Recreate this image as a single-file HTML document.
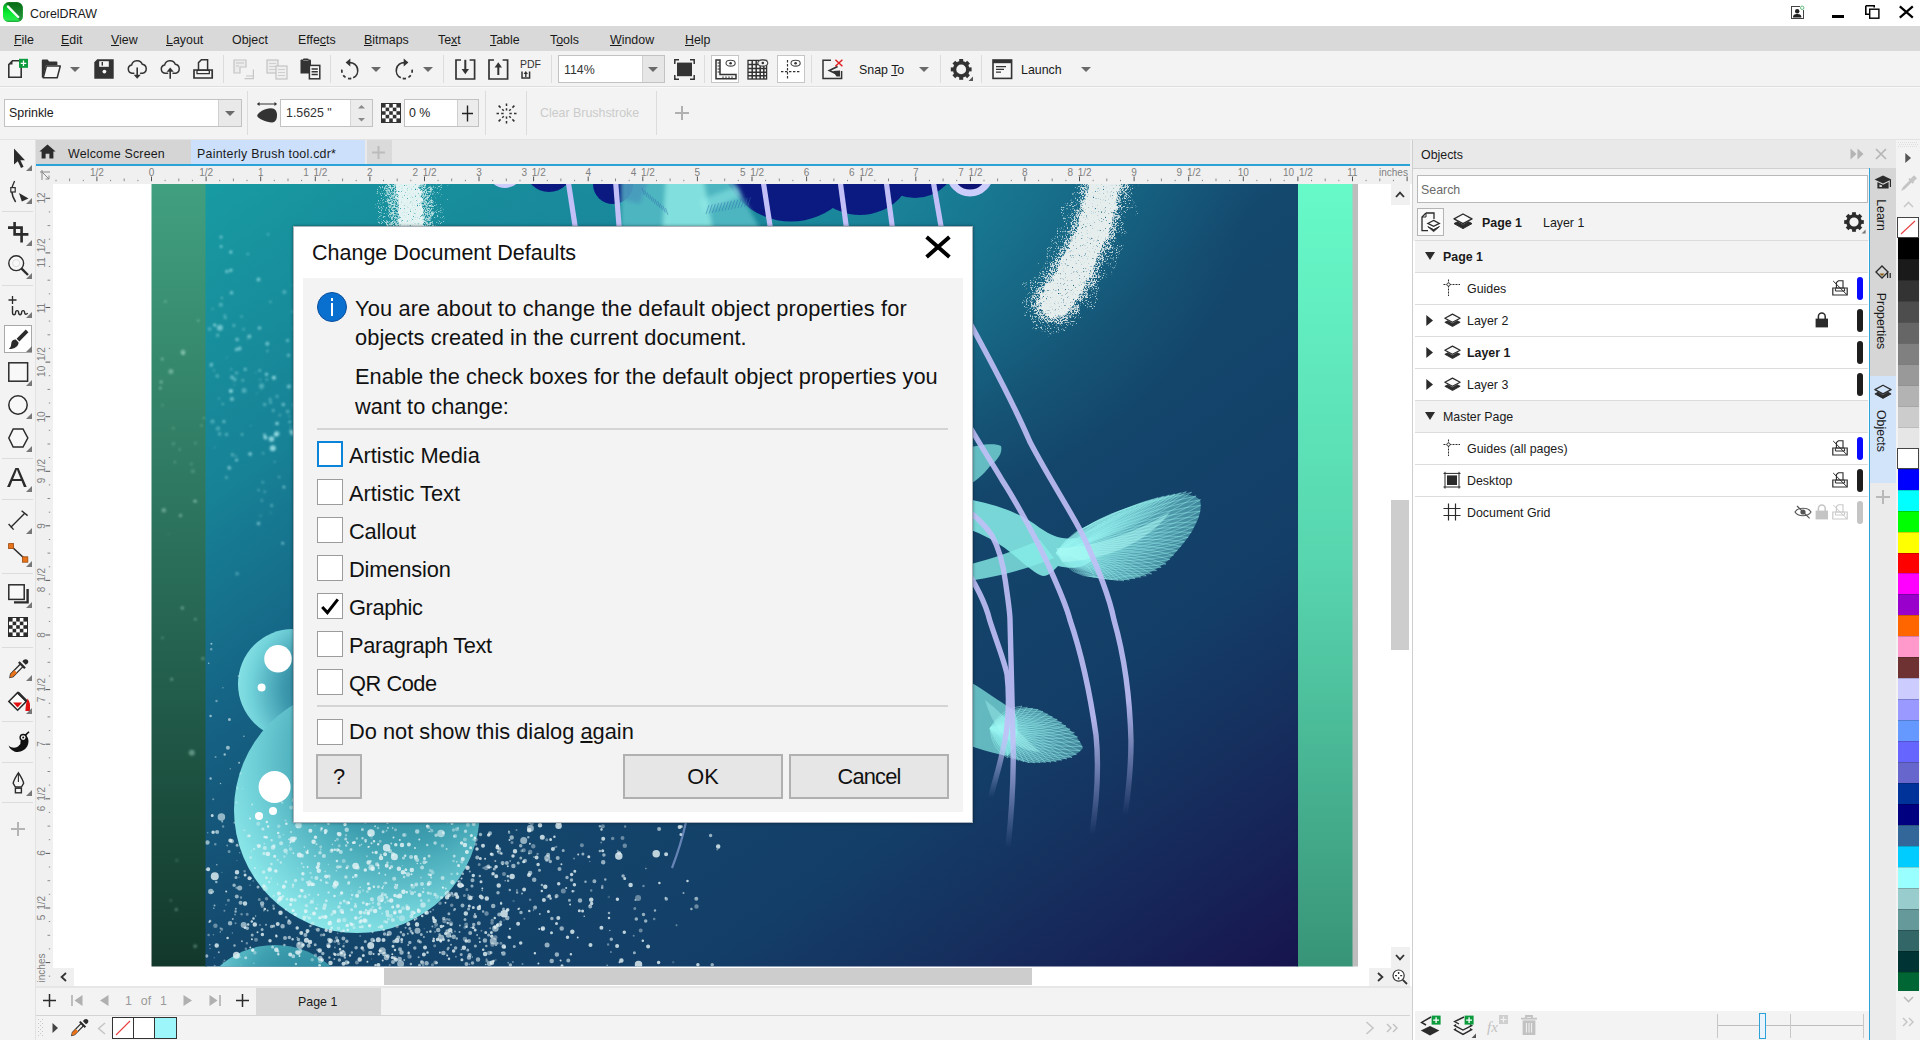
<!DOCTYPE html>
<html lang="en"><head><meta charset="utf-8"><title>CorelDRAW</title>
<style>
*{box-sizing:border-box;margin:0;padding:0}
html,body{width:1920px;height:1040px;overflow:hidden;background:#f3f3f3;font-family:"Liberation Sans",sans-serif;font-size:12px;color:#1a1a1a}
body{position:relative}
.a{position:absolute}
svg{position:absolute;overflow:visible}
u{text-decoration:underline;text-underline-offset:1px}
.t{position:absolute;white-space:nowrap;line-height:1}
.sep{position:absolute;width:1px;background:#dcdcdc}

</style></head>
<body>
<div class="a" id="titlebar" style="left:0;top:0;width:1920px;height:26px;background:#fff">
<svg style="left:3px;top:2px" width="20" height="20" viewBox="0 0 20 20"><defs><clipPath id="lgc"><rect x="0" y="0.25" width="19.75" height="19.75" rx="5.6"/></clipPath><linearGradient id="lgA" x1="0" y1="0" x2="0" y2="1"><stop offset="0" stop-color="#0c8c26"/><stop offset="0.55" stop-color="#06ee2e"/><stop offset="1" stop-color="#35e858"/></linearGradient><linearGradient id="lgB" x1="0" y1="0" x2="0" y2="1"><stop offset="0" stop-color="#066a12"/><stop offset="1" stop-color="#2a9a44"/></linearGradient></defs><g clip-path="url(#lgc)"><rect width="20" height="20.2" fill="url(#lgA)"/><path d="M2.5 0 H20 V20 H17.5 Z" fill="url(#lgB)"/><path d="M5 4.6 L15.2 15" stroke="#f4fff4" stroke-width="2.4" stroke-linecap="round"/><rect x="0" y="18.6" width="20" height="1.6" fill="#178a2c" opacity="0.6"/></g></svg>
<span class="t" style="left:30px;top:8px;font-size:12.4px;color:#1a1a1a">CorelDRAW</span>
<svg style="left:1791px;top:6px" width="14" height="13" viewBox="0 0 14 13"><rect x="0.5" y="0.5" width="12" height="12" fill="#fff" stroke="#444" stroke-width="1"/><circle cx="6.2" cy="5.2" r="2.2" fill="#222"/><path d="M2 11.5 C2 8.5 4 8 6.2 8 C8.4 8 10.4 8.5 10.4 11.5 Z" fill="#222"/><rect x="9" y="-0.5" width="4.5" height="4.5" fill="#fff"/><circle cx="11.2" cy="1.8" r="1.7" fill="none" stroke="#3aa860" stroke-width="0.8"/></svg>
<div class="a" style="left:1832px;top:15px;width:12px;height:3px;background:#000"></div>
<svg style="left:1865px;top:5px" width="15" height="14" viewBox="0 0 15 14"><path d="M0.8 0.8 H9.2 V2.6 M0.8 0.8 V9.2 H4" fill="none" stroke="#000" stroke-width="1.6"/><rect x="4.7" y="4.2" width="9.2" height="9" fill="#fff" stroke="#000" stroke-width="1.4"/></svg>
<svg style="left:1899px;top:6px" width="15" height="12" viewBox="0 0 15 12"><path d="M0.8 0.3 L13.8 11.7 M13.8 0.3 L0.8 11.7" stroke="#000" stroke-width="2.2" fill="none"/></svg>
</div>

<div class="a" id="menubar" style="left:0;top:26px;width:1920px;height:25px;background:#d9d9d9;font-size:12.4px">
<span class="t" style="left:14px;top:8px"><u>F</u>ile</span>
<span class="t" style="left:61px;top:8px"><u>E</u>dit</span>
<span class="t" style="left:111px;top:8px"><u>V</u>iew</span>
<span class="t" style="left:166px;top:8px"><u>L</u>ayout</span>
<span class="t" style="left:232px;top:8px">Ob<u>j</u>ect</span>
<span class="t" style="left:298px;top:8px">Effe<u>c</u>ts</span>
<span class="t" style="left:364px;top:8px"><u>B</u>itmaps</span>
<span class="t" style="left:438px;top:8px">Te<u>x</u>t</span>
<span class="t" style="left:490px;top:8px"><u>T</u>able</span>
<span class="t" style="left:550px;top:8px">T<u>o</u>ols</span>
<span class="t" style="left:610px;top:8px"><u>W</u>indow</span>
<span class="t" style="left:685px;top:8px"><u>H</u>elp</span>
</div>

<div class="a" id="toolbar" style="left:0;top:51px;width:1920px;height:37px;background:#f3f3f3">
<div class="a" style="left:0;top:35px;width:1920px;height:1px;background:#dedede"></div>
<div class="a" style="left:0;top:36px;width:1920px;height:1px;background:#f9f9f9"></div>
<!-- new -->
<svg style="left:8px;top:7px" width="21" height="21" viewBox="0 0 21 21"><path d="M4.5 2.8 H13.2 V19.2 H0.8 V6.5 Z" fill="#f6f6f6" stroke="#333" stroke-width="1.6" stroke-linejoin="miter"/><path d="M0.8 6.5 L4.5 2.8 V6.5 Z" fill="#333"/><rect x="11" y="0.8" width="9" height="9" fill="#0b9a3c"/><path d="M15.5 2.5 V8.1 M12.7 5.3 H18.3" stroke="#fff" stroke-width="1.3"/></svg>
<!-- open -->
<svg style="left:41px;top:8px" width="21" height="20" viewBox="0 0 21 20"><path d="M0.8 1.5 Q0.8 0.6 1.8 0.6 H6.5 L8.2 2.6 H15.5 Q16.4 2.6 16.4 3.6 V6.2 H5 L2 18.5 H0.8 Z" fill="#333"/><path d="M5.4 7 H19.3 L16.2 18.8 H2.2 Z" fill="#f6f6f6" stroke="#333" stroke-width="1.5" stroke-linejoin="round"/></svg>
<svg style="left:70px;top:16px" width="10" height="5" viewBox="0 0 10 5"><path d="M0 0 H10 L5 5 Z" fill="#6a6a6a"/></svg>
<!-- save -->
<svg style="left:94px;top:8px" width="20" height="20" viewBox="0 0 20 20"><path d="M3.2 0.3 H19.7 V19.7 H0.3 V3.2 Z" fill="#333"/><rect x="5.2" y="2.2" width="9.6" height="5.6" fill="#f6f6f6"/><rect x="7.6" y="3" width="1.4" height="3.6" fill="#333"/><circle cx="10.4" cy="12.6" r="1.9" fill="#f6f6f6"/></svg>
<!-- cloud down -->
<svg style="left:127px;top:8px" width="21" height="21" viewBox="0 0 21 21"><path d="M6.8 14.2 H5 A4.1 4.1 0 0 1 4.6 6.1 A5.6 5.6 0 0 1 15.3 5.2 A4.6 4.6 0 0 1 15.8 14.2 H13.6" fill="none" stroke="#333" stroke-width="1.5" stroke-linecap="round"/><path d="M10.2 8.5 V18" stroke="#333" stroke-width="1.6"/><path d="M6.6 15.8 H13.8 L10.2 19.8 Z" fill="#333"/></svg>
<!-- cloud up -->
<svg style="left:160px;top:8px" width="21" height="21" viewBox="0 0 21 21"><path d="M7.6 14.2 H5 A4.1 4.1 0 0 1 4.6 6.1 A5.6 5.6 0 0 1 15.3 5.2 A4.6 4.6 0 0 1 15.8 14.2 H13" fill="none" stroke="#333" stroke-width="1.5" stroke-linecap="round"/><path d="M10.2 12 V19.8" stroke="#333" stroke-width="1.6"/><path d="M6.6 12.8 H13.8 L10.2 8.6 Z" fill="#333"/></svg>
<!-- print -->
<svg style="left:193px;top:8px" width="21" height="20" viewBox="0 0 21 20"><path d="M5.5 11 V3.6 L8.4 0.8 H14.6 V11" fill="#f6f6f6" stroke="#333" stroke-width="1.5"/><path d="M1 11 H19.2 V19 H1 Z" fill="#f6f6f6" stroke="#333" stroke-width="1.7"/><path d="M4 11.3 H16.3 V14.6 H4 Z" fill="#f6f6f6" stroke="#333" stroke-width="1.3"/></svg>
<div class="sep" style="left:223px;top:4px;height:28px"></div>
<!-- cut (disabled) -->
<svg style="left:233px;top:8px" width="22" height="21" viewBox="0 0 22 21"><path d="M1 1 H13 V8 H7 V14 H1 Z" fill="#ececec" stroke="#c4c4c4" stroke-width="1.2"/><path d="M3 4 H11 M3 7 H6" stroke="#c4c4c4" stroke-width="1.1"/><path d="M20.4 10.5 V19.6 M13 17 H20.4 M11.5 19.6 H21" fill="none" stroke="#c6c6c6" stroke-width="1.2"/></svg>
<!-- copy (disabled) -->
<svg style="left:266px;top:8px" width="22" height="21" viewBox="0 0 22 21"><rect x="1" y="1" width="11" height="13" fill="#ececec" stroke="#c4c4c4" stroke-width="1.2"/><path d="M3 4.5 H10 M3 7.5 H10 M3 10.5 H10" stroke="#cfcfcf" stroke-width="1.1"/><rect x="10" y="7" width="11" height="13" fill="#efefef" stroke="#c4c4c4" stroke-width="1.2"/><path d="M12 10.5 H19 M12 13.5 H19 M12 16.5 H19" stroke="#cfcfcf" stroke-width="1.1"/></svg>
<!-- paste -->
<svg style="left:299px;top:7px" width="22" height="22" viewBox="0 0 22 22"><path d="M1.5 2.6 Q1.5 1.6 2.5 1.6 H11 Q12 1.6 12 2.6 V15.4 H1.5 Z" fill="#333"/><rect x="4" y="0.6" width="5.6" height="2.4" rx="1" fill="#333"/><rect x="4.2" y="2" width="5.2" height="0.9" fill="#888"/><rect x="10.4" y="7.4" width="10.4" height="13.4" fill="#f6f6f6" stroke="#333" stroke-width="1.5"/><path d="M12.6 11 H18.8 M12.6 13.8 H18.8 M12.6 16.6 H18.8" stroke="#333" stroke-width="1.5"/></svg>
<div class="sep" style="left:330px;top:4px;height:28px"></div>
<!-- undo -->
<svg style="left:340px;top:7px" width="22" height="23" viewBox="0 0 22 23"><path d="M9.6 4.6 A8 8 0 0 1 13.2 19.8" fill="none" stroke="#333" stroke-width="1.7"/><path d="M13.2 19.8 A8 8 0 0 1 2.4 9.5" fill="none" stroke="#333" stroke-width="1.7" stroke-dasharray="3.2 2.6" stroke-dashoffset="-2"/><path d="M10.3 0.6 V8.6 L5.6 4.6 Z" fill="#333"/></svg>
<svg style="left:371px;top:16px" width="10" height="5" viewBox="0 0 10 5"><path d="M0 0 H10 L5 5 Z" fill="#6a6a6a"/></svg>
<!-- redo -->
<svg style="left:392px;top:7px" width="22" height="23" viewBox="0 0 22 23"><path d="M12.4 4.6 A8 8 0 0 0 8.8 19.8" fill="none" stroke="#333" stroke-width="1.7"/><path d="M8.8 19.8 A8 8 0 0 0 19.6 9.5" fill="none" stroke="#333" stroke-width="1.7" stroke-dasharray="3.2 2.6" stroke-dashoffset="-2"/><path d="M11.7 0.6 V8.6 L16.4 4.6 Z" fill="#333"/></svg>
<svg style="left:423px;top:16px" width="10" height="5" viewBox="0 0 10 5"><path d="M0 0 H10 L5 5 Z" fill="#6a6a6a"/></svg>
<div class="sep" style="left:443px;top:4px;height:28px"></div>
<!-- import -->
<svg style="left:455px;top:8px" width="21" height="21" viewBox="0 0 21 21"><path d="M6 1 H1 V20 H19.6 V1 H14.6" fill="none" stroke="#333" stroke-width="1.7"/><path d="M10.3 0.8 V12" stroke="#333" stroke-width="2"/><path d="M6.6 10 H14 L10.3 15.2 Z" fill="#333"/></svg>
<!-- export -->
<svg style="left:488px;top:8px" width="21" height="21" viewBox="0 0 21 21"><path d="M6 1 H1 V20 H19.6 V1 H14.6" fill="none" stroke="#333" stroke-width="1.7"/><path d="M10.3 7 V16" stroke="#333" stroke-width="2"/><path d="M6.6 8.6 H14 L10.3 3.2 Z" fill="#333"/></svg>
<!-- pdf -->
<span class="t" style="left:520px;top:8px;font-size:10.5px;color:#333;letter-spacing:0">PDF</span>
<svg style="left:521px;top:18px" width="10" height="10" viewBox="0 0 10 10"><path d="M1 2.5 V9 H8.6 V2.5" fill="none" stroke="#333" stroke-width="1.5"/><path d="M4.8 8 V4" stroke="#333" stroke-width="1.4"/><path d="M2.6 5 H7 L4.8 2 Z" fill="#333"/></svg>
<div class="sep" style="left:551px;top:4px;height:28px"></div>
<!-- zoom combo -->
<div class="a" style="left:558px;top:4px;width:107px;height:28px;background:#fff;border:1px solid #c2c2c2"></div>
<div class="a" style="left:642px;top:5px;width:22px;height:26px;background:#e6e6e6;border-left:1px solid #d0d0d0"></div>
<span class="t" style="left:564px;top:13px;font-size:12.4px;color:#333">114%</span>
<svg style="left:648px;top:16px" width="10" height="5" viewBox="0 0 10 5"><path d="M0 0 H10 L5 5 Z" fill="#6a6a6a"/></svg>
<!-- full screen -->
<svg style="left:674px;top:8px" width="21" height="21" viewBox="0 0 21 21"><rect x="3" y="3.6" width="15" height="13.6" fill="#333"/><path d="M0.8 5 V0.8 H5 M16 0.8 H20.2 V5 M20.2 16 V20.2 H16 M5 20.2 H0.8 V16" fill="none" stroke="#333" stroke-width="1.5"/></svg>
<div class="sep" style="left:704px;top:4px;height:28px"></div>
<!-- rulers toggle -->
<div class="a" style="left:711px;top:4px;width:28px;height:28px;background:#fff;border:1px solid #c6c6c6"></div>
<svg style="left:715px;top:8px" width="22" height="21" viewBox="0 0 22 21"><path d="M1 1 H5 V15.5 H21 V19.8 H1 Z" fill="#f6f6f6" stroke="#333" stroke-width="1.5"/><path d="M2.6 4 H5 M2.6 7 H5 M2.6 10 H5 M2.6 13 H5 M8 17.4 V19.8 M11 17.4 V19.8 M14 17.4 V19.8 M17 17.4 V19.8" stroke="#333" stroke-width="1"/><ellipse cx="15.6" cy="4.2" rx="4.6" ry="2.9" fill="#fff" stroke="#444" stroke-width="1.1"/><circle cx="15.6" cy="4.2" r="1.3" fill="#333"/></svg>
<!-- grid toggle -->
<svg style="left:747px;top:8px" width="22" height="21" viewBox="0 0 22 21"><rect x="1" y="1.4" width="18.6" height="18.6" fill="#f6f6f6" stroke="#333" stroke-width="1.3"/><path d="M5.2 1.4 V20 M9.2 1.4 V20 M13.2 1.4 V20 M16.8 1.4 V20 M1 5.6 H19.6 M1 9.4 H19.6 M1 13.2 H19.6 M1 16.8 H19.6" stroke="#333" stroke-width="1.5"/><ellipse cx="15.8" cy="4" rx="5" ry="3.1" fill="#f3f3f3" stroke="#444" stroke-width="1.1"/><circle cx="15.8" cy="4" r="1.3" fill="#333"/></svg>
<!-- guidelines toggle -->
<div class="a" style="left:777px;top:4px;width:28px;height:28px;background:#fff;border:1px solid #c6c6c6"></div>
<svg style="left:780px;top:8px" width="22" height="21" viewBox="0 0 22 21"><path d="M7.5 1 V20" stroke="#333" stroke-width="1.2" stroke-dasharray="2.4 1.6"/><path d="M1 12.6 H21" stroke="#333" stroke-width="1.2" stroke-dasharray="2.4 1.6"/><ellipse cx="15.6" cy="4.2" rx="4.6" ry="2.9" fill="#fff" stroke="#444" stroke-width="1.1"/><circle cx="15.6" cy="4.2" r="1.3" fill="#333"/></svg>
<div class="sep" style="left:811px;top:4px;height:28px"></div>
<!-- snap off -->
<svg style="left:822px;top:8px" width="22" height="21" viewBox="0 0 22 21"><path d="M9 1.2 H1 V19.6 H19.6 V12" fill="none" stroke="#333" stroke-width="1.5"/><path d="M15.6 7.6 L7.4 11.6 L15.6 15.6" fill="none" stroke="#333" stroke-width="1.7"/><path d="M11 12 L18 11.5 V17.6 H14.5 Z" fill="#333"/><path d="M13.4 0.8 L20.4 7.2 M20.4 0.8 L13.4 7.2" stroke="#e02020" stroke-width="1.5"/></svg>
<span class="t" style="left:859px;top:13px;font-size:12.4px">Snap <u>T</u>o</span>
<svg style="left:919px;top:16px" width="10" height="5" viewBox="0 0 10 5"><path d="M0 0 H10 L5 5 Z" fill="#6a6a6a"/></svg>
<div class="sep" style="left:940px;top:4px;height:28px"></div>
<!-- gear -->
<svg style="left:950px;top:7px" width="24" height="24" viewBox="0 0 24 24"><g transform="translate(11.2,11.4)"><circle r="6.6" fill="none" stroke="#333" stroke-width="3.4"/><g fill="#333"><rect x="-2" y="-10.4" width="4" height="4"/><rect x="-2" y="6.4" width="4" height="4"/><rect x="-10.4" y="-2" width="4" height="4"/><rect x="6.4" y="-2" width="4" height="4"/><g transform="rotate(45)"><rect x="-2" y="-10.4" width="4" height="4"/><rect x="-2" y="6.4" width="4" height="4"/><rect x="-10.4" y="-2" width="4" height="4"/><rect x="6.4" y="-2" width="4" height="4"/></g></g></g><path d="M23 18.5 V23 H18.5 Z" fill="#555"/></svg>
<div class="sep" style="left:981px;top:4px;height:28px"></div>
<!-- launch -->
<svg style="left:992px;top:8px" width="21" height="21" viewBox="0 0 21 21"><rect x="1" y="1" width="18.6" height="18.4" fill="#f6f6f6" stroke="#333" stroke-width="1.6"/><rect x="1" y="1" width="18.6" height="3.2" fill="#333"/><path d="M4 7.6 H14 M4 10.4 H12 M4 13.2 H9" stroke="#333" stroke-width="1.3"/></svg>
<span class="t" style="left:1021px;top:13px;font-size:12.4px">Launch</span>
<svg style="left:1081px;top:16px" width="10" height="5" viewBox="0 0 10 5"><path d="M0 0 H10 L5 5 Z" fill="#6a6a6a"/></svg>
</div>

<div class="a" id="propbar" style="left:0;top:88px;width:1920px;height:52px;background:#f3f3f3">
<div class="a" style="left:0;top:51px;width:1920px;height:1px;background:#e2e2e2"></div>
<!-- preset combo -->
<div class="a" style="left:4px;top:11px;width:238px;height:28px;background:#fff;border:1px solid #c2c2c2"></div>
<div class="a" style="left:218px;top:12px;width:23px;height:26px;background:#e9e9e9;border-left:1px solid #d0d0d0"></div>
<span class="t" style="left:9px;top:19px;font-size:12.4px">Sprinkle</span>
<svg style="left:225px;top:23px" width="10" height="5" viewBox="0 0 10 5"><path d="M0 0 H10 L5 5 Z" fill="#6a6a6a"/></svg>
<div class="sep" style="left:247px;top:3px;height:44px"></div>
<!-- brush size -->
<svg style="left:256px;top:14px" width="22" height="22" viewBox="0 0 22 22"><path d="M1.5 2 H20.5 M1.5 2 L3.6 0.6 M1.5 2 L3.6 3.4 M20.5 2 L18.4 0.6 M20.5 2 L18.4 3.4" stroke="#333" stroke-width="1.1" fill="none"/><path d="M1.2 13.6 C1.6 10.6 9 6.2 14.8 6.2 C19.4 6.2 21 9.6 21 13 C21 16.8 19.8 20.4 16 20.4 C10.4 20.4 1 16.6 1.2 13.6 Z" fill="#333"/></svg>
<div class="a" style="left:280px;top:11px;width:93px;height:28px;background:#fff;border:1px solid #c2c2c2"></div>
<div class="a" style="left:350px;top:12px;width:22px;height:26px;background:#ececec;border-left:1px solid #d6d6d6"></div>
<span class="t" style="left:286px;top:19px;font-size:12.4px;color:#333">1.5625 "</span>
<svg style="left:357.5px;top:16.5px" width="7" height="3.5" viewBox="0 0 8 4"><path d="M0 4 H8 L4 0 Z" fill="#8a8a8a"/></svg>
<svg style="left:357.5px;top:30px" width="7" height="3.5" viewBox="0 0 8 4"><path d="M0 0 H8 L4 4 Z" fill="#8a8a8a"/></svg>
<!-- transparency -->
<svg style="left:381px;top:15px" width="20" height="20" viewBox="0 0 20 20"><rect x="0.5" y="0.5" width="19" height="19" fill="#fff" stroke="#333" stroke-width="1"/><g fill="#333"><rect x="1" y="1" width="3.6" height="3.6"/><rect x="8.2" y="1" width="3.6" height="3.6"/><rect x="15.4" y="1" width="3.6" height="3.6"/><rect x="4.6" y="4.6" width="3.6" height="3.6"/><rect x="11.8" y="4.6" width="3.6" height="3.6"/><rect x="1" y="8.2" width="3.6" height="3.6"/><rect x="8.2" y="8.2" width="3.6" height="3.6"/><rect x="15.4" y="8.2" width="3.6" height="3.6"/><rect x="4.6" y="11.8" width="3.6" height="3.6"/><rect x="11.8" y="11.8" width="3.6" height="3.6"/><rect x="1" y="15.4" width="3.6" height="3.6"/><rect x="8.2" y="15.4" width="3.6" height="3.6"/><rect x="15.4" y="15.4" width="3.6" height="3.6"/></g></svg>
<div class="a" style="left:404px;top:11px;width:75px;height:28px;background:#fff;border:1px solid #c2c2c2"></div>
<div class="a" style="left:457px;top:12px;width:21px;height:26px;background:#ececec;border-left:1px solid #cfcfcf"></div>
<span class="t" style="left:409px;top:19px;font-size:12.4px;color:#222">0 %</span>
<svg style="left:461px;top:17px" width="13" height="17" viewBox="0 0 13 17"><path d="M6.5 0.5 V16.5 M1 8.5 H12" stroke="#222" stroke-width="1.4"/></svg>
<div class="sep" style="left:485px;top:3px;height:44px"></div>
<!-- spray icon -->
<svg style="left:496px;top:15px" width="21" height="21" viewBox="0 0 21 21"><g stroke="#333" stroke-width="1.5" fill="none"><path d="M10.5 0.5 V3 M10.5 5.2 V7.6 M10.5 13.4 V15.8 M10.5 18 V20.5 M0.5 10.5 H3 M5.2 10.5 H7.6 M13.4 10.5 H15.8 M18 10.5 H20.5"/><path d="M2.6 2.6 L4.6 4.6 M6.2 6.2 L7.8 7.8 M18.4 2.6 L16.4 4.6 M14.8 6.2 L13.2 7.8 M2.6 18.4 L4.6 16.4 M6.2 14.8 L7.8 13.2 M18.4 18.4 L16.4 16.4 M14.8 14.8 L13.2 13.2"/></g></svg>
<div class="sep" style="left:526px;top:3px;height:44px"></div>
<span class="t" style="left:540px;top:19px;font-size:12.4px;color:#cbcbcb">Clear Brushstroke</span>
<div class="sep" style="left:656px;top:3px;height:44px"></div>
<svg style="left:675px;top:18px" width="14" height="14" viewBox="0 0 14 14"><path d="M7 0 V14 M0 7 H14" stroke="#b0b0b0" stroke-width="2"/></svg>
</div>

<div class="a" id="toolbox" style="left:0;top:140px;width:36px;height:900px;background:#f3f3f3">
<div class="a" style="left:35px;top:0;width:1px;height:900px;background:#e2e2e2"></div>
<div class="a" style="left:2px;top:71px;width:31px;height:1px;background:#dcdcdc"></div>
<div class="a" style="left:2px;top:145px;width:31px;height:1px;background:#dcdcdc"></div>
<div class="a" style="left:2px;top:318px;width:31px;height:1px;background:#dcdcdc"></div>
<div class="a" style="left:2px;top:359px;width:31px;height:1px;background:#dcdcdc"></div>
<div class="a" style="left:2px;top:433px;width:31px;height:1px;background:#dcdcdc"></div>
<div class="a" style="left:2px;top:507px;width:31px;height:1px;background:#dcdcdc"></div>
<div class="a" style="left:2px;top:581px;width:31px;height:1px;background:#dcdcdc"></div>
<div class="a" style="left:2px;top:622px;width:31px;height:1px;background:#dcdcdc"></div>
<div class="a" style="left:2px;top:662px;width:31px;height:1px;background:#dcdcdc"></div>
<!-- pick -->
<svg style="left:13px;top:8px" width="13" height="21" viewBox="0 0 13 21"><path d="M1 0.5 V16.5 L4.8 13.2 L8 20 L10.6 18.8 L7.4 12.2 H12 Z" fill="#2b2b2b"/></svg>
<svg style="left:26px;top:25px" width="6" height="6" viewBox="0 0 6 6"><path d="M6 0 V6 H0 Z" fill="#777"/></svg>
<!-- shape -->
<svg style="left:9px;top:40px" width="22" height="24" viewBox="0 0 22 24"><path d="M5.6 1 C1.5 8 2 15 6.6 22" fill="none" stroke="#2b2b2b" stroke-width="1.4"/><rect x="1.8" y="7.6" width="4.4" height="4.4" fill="#f6f6f6" stroke="#2b2b2b" stroke-width="1.2"/><path d="M10 13 L19.5 18.5 L12.8 21.6 Z" fill="#2b2b2b"/></svg>
<svg style="left:26px;top:58px" width="6" height="6" viewBox="0 0 6 6"><path d="M6 0 V6 H0 Z" fill="#777"/></svg>
<!-- crop -->
<svg style="left:8px;top:82px" width="21" height="21" viewBox="0 0 21 21"><path d="M6.6 0 V12.4 H20.4 M0 5.6 H13.6 V20.4" fill="none" stroke="#2b2b2b" stroke-width="2.6"/></svg>
<svg style="left:26px;top:100px" width="6" height="6" viewBox="0 0 6 6"><path d="M6 0 V6 H0 Z" fill="#777"/></svg>
<!-- zoom -->
<svg style="left:8px;top:115px" width="22" height="22" viewBox="0 0 22 22"><circle cx="8.2" cy="8.2" r="7.4" fill="#f8f8f8" stroke="#2b2b2b" stroke-width="1.4"/><circle cx="8.2" cy="8.2" r="3.6" fill="none" stroke="#ddd" stroke-width="1"/><path d="M13.6 13.6 L20 20" stroke="#2b2b2b" stroke-width="2.4"/></svg>
<svg style="left:26px;top:133px" width="6" height="6" viewBox="0 0 6 6"><path d="M6 0 V6 H0 Z" fill="#777"/></svg>
<!-- freehand -->
<svg style="left:7px;top:155px" width="24" height="22" viewBox="0 0 24 22"><path d="M5.5 1 V9 M1.5 5 H9.5" stroke="#2b2b2b" stroke-width="1.3"/><path d="M5.5 11 V17.5 C5.5 20.5 8.6 20.5 8.6 17.6 C8.6 15 11.6 15 11.6 17.6 C11.6 20.4 14.6 20.4 14.6 17.6 C14.6 15 17.6 15 17.6 17.6 C17.6 19.6 19.6 19.8 20.6 18" fill="none" stroke="#2b2b2b" stroke-width="1.4"/></svg>
<svg style="left:26px;top:172px" width="6" height="6" viewBox="0 0 6 6"><path d="M6 0 V6 H0 Z" fill="#777"/></svg>
<!-- artistic media (selected) -->
<div class="a" style="left:4px;top:185px;width:28px;height:28px;background:#fff;border:1px solid #a9a9a9"></div>
<svg style="left:8px;top:189px" width="21" height="21" viewBox="0 0 21 21"><path d="M17.8 0.6 L20.4 3.2 L11.4 12.6 L8.6 9.8 Z" fill="#2b2b2b"/><path d="M7.8 10.6 L10.6 13.4 C10.6 17 6.5 20.2 0.8 20 C3.4 18 3 16 3.4 13.8 C3.8 11.6 6 10.4 7.8 10.6 Z" fill="#2b2b2b"/></svg>
<svg style="left:26px;top:206px" width="6" height="6" viewBox="0 0 6 6"><path d="M6 0 V6 H0 Z" fill="#777"/></svg>
<!-- rectangle -->
<svg style="left:8px;top:222px" width="21" height="20" viewBox="0 0 21 20"><rect x="0.8" y="0.8" width="18.8" height="18.4" fill="#f8f8f8" stroke="#2b2b2b" stroke-width="1.5"/></svg>
<svg style="left:26px;top:240px" width="6" height="6" viewBox="0 0 6 6"><path d="M6 0 V6 H0 Z" fill="#777"/></svg>
<!-- ellipse -->
<svg style="left:8px;top:255px" width="21" height="21" viewBox="0 0 21 21"><circle cx="10" cy="10" r="9.2" fill="#f8f8f8" stroke="#2b2b2b" stroke-width="1.5"/></svg>
<svg style="left:26px;top:273px" width="6" height="6" viewBox="0 0 6 6"><path d="M6 0 V6 H0 Z" fill="#777"/></svg>
<!-- polygon -->
<svg style="left:8px;top:288px" width="21" height="21" viewBox="0 0 21 21"><path d="M5.2 1 H15 L19.8 10 L15 19 H5.2 L0.8 10 Z" fill="#f8f8f8" stroke="#2b2b2b" stroke-width="1.5"/></svg>
<svg style="left:26px;top:306px" width="6" height="6" viewBox="0 0 6 6"><path d="M6 0 V6 H0 Z" fill="#777"/></svg>
<!-- text tool -->
<span class="t" style="left:7px;top:324px;font-size:28px;color:#2b2b2b;transform:scaleX(1.06);transform-origin:0 0">A</span>
<svg style="left:26px;top:346px" width="6" height="6" viewBox="0 0 6 6"><path d="M6 0 V6 H0 Z" fill="#777"/></svg>
<!-- dimension -->
<svg style="left:8px;top:370px" width="21" height="21" viewBox="0 0 21 21"><path d="M2.6 17.4 L17 3 M0.6 14 L5.6 19.6 M13.6 0.8 L19.6 5.6" stroke="#2b2b2b" stroke-width="1.4" fill="none"/></svg>
<svg style="left:26px;top:388px" width="6" height="6" viewBox="0 0 6 6"><path d="M6 0 V6 H0 Z" fill="#777"/></svg>
<!-- connector -->
<svg style="left:8px;top:403px" width="22" height="21" viewBox="0 0 22 21"><path d="M3 3 L17 16" stroke="#2b2b2b" stroke-width="1.6"/><rect x="0.6" y="0.6" width="5" height="5" fill="#e8731a" stroke="#9a4a10" stroke-width="0.8"/><rect x="14.4" y="13.8" width="5.4" height="5.4" fill="#e8731a" stroke="#9a4a10" stroke-width="0.8"/></svg>
<svg style="left:26px;top:421px" width="6" height="6" viewBox="0 0 6 6"><path d="M6 0 V6 H0 Z" fill="#777"/></svg>
<!-- drop shadow -->
<svg style="left:8px;top:444px" width="22" height="21" viewBox="0 0 22 21"><path d="M6 18.4 H19.6 V5" fill="none" stroke="#2b2b2b" stroke-width="2.4"/><rect x="0.8" y="0.8" width="15.4" height="14.6" fill="#f8f8f8" stroke="#2b2b2b" stroke-width="1.5"/></svg>
<svg style="left:26px;top:462px" width="6" height="6" viewBox="0 0 6 6"><path d="M6 0 V6 H0 Z" fill="#777"/></svg>
<!-- transparency -->
<svg style="left:8px;top:477px" width="20" height="20" viewBox="0 0 20 20"><rect x="0.5" y="0.5" width="19" height="19" fill="#fff" stroke="#2b2b2b" stroke-width="1"/><g fill="#2b2b2b"><rect x="1" y="1" width="3.6" height="3.6"/><rect x="8.2" y="1" width="3.6" height="3.6"/><rect x="15.4" y="1" width="3.6" height="3.6"/><rect x="4.6" y="4.6" width="3.6" height="3.6"/><rect x="11.8" y="4.6" width="3.6" height="3.6"/><rect x="1" y="8.2" width="3.6" height="3.6"/><rect x="8.2" y="8.2" width="3.6" height="3.6"/><rect x="15.4" y="8.2" width="3.6" height="3.6"/><rect x="4.6" y="11.8" width="3.6" height="3.6"/><rect x="11.8" y="11.8" width="3.6" height="3.6"/><rect x="1" y="15.4" width="3.6" height="3.6"/><rect x="8.2" y="15.4" width="3.6" height="3.6"/><rect x="15.4" y="15.4" width="3.6" height="3.6"/></g></svg>
<!-- eyedropper -->
<svg style="left:8px;top:518px" width="21" height="21" viewBox="0 0 21 21"><path d="M12.4 6 L15 8.6 L5 18.6 L2 19.4 L2.6 16 Z" fill="#f3f3f3" stroke="#2b2b2b" stroke-width="1.3"/><path d="M2 19.4 L2.6 16 L6.4 12.2 L9 14.8 L5 18.6 Z" fill="#e8731a"/><path d="M11.6 3.2 L17.8 9.4 L16.2 11 L10 4.8 Z" fill="#2b2b2b"/><path d="M14.4 3.6 C15.6 1 18.2 0.6 19.6 2 C21 3.4 20.4 5.6 17.6 6.8 Z" fill="#2b2b2b"/></svg>
<svg style="left:26px;top:535px" width="6" height="6" viewBox="0 0 6 6"><path d="M6 0 V6 H0 Z" fill="#777"/></svg>
<!-- fill -->
<svg style="left:8px;top:551px" width="23" height="22" viewBox="0 0 23 22"><path d="M9.6 1.6 L18.4 10.4 L9.6 19.2 L0.8 10.4 Z" fill="#fff" stroke="#2b2b2b" stroke-width="1.5"/><path d="M9.8 1.4 L18.6 10.2" stroke="#2b2b2b" stroke-width="2.6"/><path d="M5 11.6 H14.2 L9.6 16.6 Z" fill="#e01010"/><path d="M19.6 7.6 C21.4 10.6 22.2 12.6 22 14.6 L22 20 H17.4 C17.6 16 18 12 19.6 7.6 Z" fill="#e01010"/></svg>
<svg style="left:26px;top:568px" width="6" height="6" viewBox="0 0 6 6"><path d="M6 0 V6 H0 Z" fill="#777"/></svg>
<!-- smart drawing swirl -->
<svg style="left:8px;top:591px" width="23" height="22" viewBox="0 0 23 22"><path d="M0.6 14.6 C4 18 9.6 17.4 11.6 13.6 C13 11 12.4 8.4 14.6 5.6 L17.2 3.6 C20.4 6 21.6 10.6 19.4 15 C17 19.8 11 22 6.4 20.4 C3.4 19.4 1.4 17.4 0.6 14.6 Z" fill="#111"/><circle cx="15.2" cy="6.6" r="3.1" fill="#f3f3f3" stroke="#111" stroke-width="1.4"/><circle cx="15.2" cy="6.6" r="1" fill="#111"/><path d="M17.2 4.4 L21 0.8" stroke="#111" stroke-width="1.5"/><circle cx="11" cy="12.4" r="1.4" fill="#f3f3f3"/></svg>
<!-- pen nib -->
<svg style="left:12px;top:632px" width="13" height="22" viewBox="0 0 13 22"><path d="M6.4 0.8 C9 5 11.4 8.6 11.6 11.4 L9.4 15 H3.4 L1.2 11.4 C1.4 8.6 3.8 5 6.4 0.8 Z" fill="#f6f6f6" stroke="#2b2b2b" stroke-width="1.4"/><path d="M6.4 2 V10" stroke="#2b2b2b" stroke-width="1.1"/><rect x="3.4" y="16.2" width="6" height="4.6" fill="#f6f6f6" stroke="#2b2b2b" stroke-width="1.4"/></svg>
<svg style="left:26px;top:650px" width="6" height="6" viewBox="0 0 6 6"><path d="M6 0 V6 H0 Z" fill="#777"/></svg>
<!-- plus -->
<svg style="left:11px;top:682px" width="14" height="14" viewBox="0 0 14 14"><path d="M7 0 V14 M0 7 H14" stroke="#b4b4b4" stroke-width="2"/></svg>
</div>

<div class="a" id="tabs" style="left:36px;top:140px;width:1374px;height:26px;background:#e9e9e9">
<div class="a" style="left:0;top:0;width:155px;height:24px;background:#d5d5d5"></div>
<div class="a" style="left:155px;top:0;width:174px;height:24px;background:#cce0fb"></div>
<div class="a" style="left:331px;top:0;width:25px;height:24px;background:#dadada"></div>
<div class="a" style="left:0;top:24.3px;width:1374px;height:1.6px;background:#2ba3d9"></div>
<svg style="left:3px;top:4px" width="17" height="15" viewBox="0 0 17 15"><path d="M8.5 0.4 L16.6 7.6 H14.4 V14.6 H10.4 V9.8 H6.6 V14.6 H2.6 V7.6 H0.4 Z" fill="#2b2b2b"/></svg>
<span class="t" style="left:32px;top:8px;font-size:12.4px;letter-spacing:0.2px">Welcome Screen</span>
<span class="t" style="left:161px;top:8px;font-size:12.4px;letter-spacing:0.25px">Painterly Brush tool.cdr*</span>
<svg style="left:336px;top:6px" width="13" height="13" viewBox="0 0 13 13"><path d="M6.5 0 V13 M0 6.5 H13" stroke="#bcbcbc" stroke-width="2"/></svg>
</div>

<div class="a" id="hruler" style="left:36px;top:166px;width:1374px;height:18px;background:#f0f0f0;overflow:hidden;font-size:10px;color:#808080;word-spacing:2px">
<svg style="left:0;top:0" width="1374" height="18"><path d="M20.0 13.8 V15.2" stroke="#8a8a8a" stroke-width="1"/><path d="M33.6 12.5 V15.2" stroke="#8a8a8a" stroke-width="1"/><path d="M47.3 13.8 V15.2" stroke="#8a8a8a" stroke-width="1"/><path d="M60.9 10.5 V15.2" stroke="#555" stroke-width="1"/><path d="M74.6 13.8 V15.2" stroke="#8a8a8a" stroke-width="1"/><path d="M88.2 12.5 V15.2" stroke="#8a8a8a" stroke-width="1"/><path d="M101.9 13.8 V15.2" stroke="#8a8a8a" stroke-width="1"/><path d="M115.5 10.5 V15.2" stroke="#555" stroke-width="1"/><path d="M129.1 13.8 V15.2" stroke="#8a8a8a" stroke-width="1"/><path d="M142.8 12.5 V15.2" stroke="#8a8a8a" stroke-width="1"/><path d="M156.4 13.8 V15.2" stroke="#8a8a8a" stroke-width="1"/><path d="M170.1 10.5 V15.2" stroke="#555" stroke-width="1"/><path d="M183.7 13.8 V15.2" stroke="#8a8a8a" stroke-width="1"/><path d="M197.4 12.5 V15.2" stroke="#8a8a8a" stroke-width="1"/><path d="M211.0 13.8 V15.2" stroke="#8a8a8a" stroke-width="1"/><path d="M224.7 10.5 V15.2" stroke="#555" stroke-width="1"/><path d="M238.3 13.8 V15.2" stroke="#8a8a8a" stroke-width="1"/><path d="M252.0 12.5 V15.2" stroke="#8a8a8a" stroke-width="1"/><path d="M265.6 13.8 V15.2" stroke="#8a8a8a" stroke-width="1"/><path d="M279.3 10.5 V15.2" stroke="#555" stroke-width="1"/><path d="M292.9 13.8 V15.2" stroke="#8a8a8a" stroke-width="1"/><path d="M306.6 12.5 V15.2" stroke="#8a8a8a" stroke-width="1"/><path d="M320.2 13.8 V15.2" stroke="#8a8a8a" stroke-width="1"/><path d="M333.9 10.5 V15.2" stroke="#555" stroke-width="1"/><path d="M347.5 13.8 V15.2" stroke="#8a8a8a" stroke-width="1"/><path d="M361.2 12.5 V15.2" stroke="#8a8a8a" stroke-width="1"/><path d="M374.8 13.8 V15.2" stroke="#8a8a8a" stroke-width="1"/><path d="M388.5 10.5 V15.2" stroke="#555" stroke-width="1"/><path d="M402.1 13.8 V15.2" stroke="#8a8a8a" stroke-width="1"/><path d="M415.7 12.5 V15.2" stroke="#8a8a8a" stroke-width="1"/><path d="M429.4 13.8 V15.2" stroke="#8a8a8a" stroke-width="1"/><path d="M443.0 10.5 V15.2" stroke="#555" stroke-width="1"/><path d="M456.7 13.8 V15.2" stroke="#8a8a8a" stroke-width="1"/><path d="M470.3 12.5 V15.2" stroke="#8a8a8a" stroke-width="1"/><path d="M484.0 13.8 V15.2" stroke="#8a8a8a" stroke-width="1"/><path d="M497.6 10.5 V15.2" stroke="#555" stroke-width="1"/><path d="M511.3 13.8 V15.2" stroke="#8a8a8a" stroke-width="1"/><path d="M524.9 12.5 V15.2" stroke="#8a8a8a" stroke-width="1"/><path d="M538.6 13.8 V15.2" stroke="#8a8a8a" stroke-width="1"/><path d="M552.2 10.5 V15.2" stroke="#555" stroke-width="1"/><path d="M565.9 13.8 V15.2" stroke="#8a8a8a" stroke-width="1"/><path d="M579.5 12.5 V15.2" stroke="#8a8a8a" stroke-width="1"/><path d="M593.2 13.8 V15.2" stroke="#8a8a8a" stroke-width="1"/><path d="M606.8 10.5 V15.2" stroke="#555" stroke-width="1"/><path d="M620.5 13.8 V15.2" stroke="#8a8a8a" stroke-width="1"/><path d="M634.1 12.5 V15.2" stroke="#8a8a8a" stroke-width="1"/><path d="M647.8 13.8 V15.2" stroke="#8a8a8a" stroke-width="1"/><path d="M661.4 10.5 V15.2" stroke="#555" stroke-width="1"/><path d="M675.0 13.8 V15.2" stroke="#8a8a8a" stroke-width="1"/><path d="M688.7 12.5 V15.2" stroke="#8a8a8a" stroke-width="1"/><path d="M702.3 13.8 V15.2" stroke="#8a8a8a" stroke-width="1"/><path d="M716.0 10.5 V15.2" stroke="#555" stroke-width="1"/><path d="M729.6 13.8 V15.2" stroke="#8a8a8a" stroke-width="1"/><path d="M743.3 12.5 V15.2" stroke="#8a8a8a" stroke-width="1"/><path d="M756.9 13.8 V15.2" stroke="#8a8a8a" stroke-width="1"/><path d="M770.6 10.5 V15.2" stroke="#555" stroke-width="1"/><path d="M784.2 13.8 V15.2" stroke="#8a8a8a" stroke-width="1"/><path d="M797.9 12.5 V15.2" stroke="#8a8a8a" stroke-width="1"/><path d="M811.5 13.8 V15.2" stroke="#8a8a8a" stroke-width="1"/><path d="M825.2 10.5 V15.2" stroke="#555" stroke-width="1"/><path d="M838.8 13.8 V15.2" stroke="#8a8a8a" stroke-width="1"/><path d="M852.5 12.5 V15.2" stroke="#8a8a8a" stroke-width="1"/><path d="M866.1 13.8 V15.2" stroke="#8a8a8a" stroke-width="1"/><path d="M879.8 10.5 V15.2" stroke="#555" stroke-width="1"/><path d="M893.4 13.8 V15.2" stroke="#8a8a8a" stroke-width="1"/><path d="M907.1 12.5 V15.2" stroke="#8a8a8a" stroke-width="1"/><path d="M920.7 13.8 V15.2" stroke="#8a8a8a" stroke-width="1"/><path d="M934.4 10.5 V15.2" stroke="#555" stroke-width="1"/><path d="M948.0 13.8 V15.2" stroke="#8a8a8a" stroke-width="1"/><path d="M961.6 12.5 V15.2" stroke="#8a8a8a" stroke-width="1"/><path d="M975.3 13.8 V15.2" stroke="#8a8a8a" stroke-width="1"/><path d="M988.9 10.5 V15.2" stroke="#555" stroke-width="1"/><path d="M1002.6 13.8 V15.2" stroke="#8a8a8a" stroke-width="1"/><path d="M1016.2 12.5 V15.2" stroke="#8a8a8a" stroke-width="1"/><path d="M1029.9 13.8 V15.2" stroke="#8a8a8a" stroke-width="1"/><path d="M1043.5 10.5 V15.2" stroke="#555" stroke-width="1"/><path d="M1057.2 13.8 V15.2" stroke="#8a8a8a" stroke-width="1"/><path d="M1070.8 12.5 V15.2" stroke="#8a8a8a" stroke-width="1"/><path d="M1084.5 13.8 V15.2" stroke="#8a8a8a" stroke-width="1"/><path d="M1098.1 10.5 V15.2" stroke="#555" stroke-width="1"/><path d="M1111.8 13.8 V15.2" stroke="#8a8a8a" stroke-width="1"/><path d="M1125.4 12.5 V15.2" stroke="#8a8a8a" stroke-width="1"/><path d="M1139.1 13.8 V15.2" stroke="#8a8a8a" stroke-width="1"/><path d="M1152.7 10.5 V15.2" stroke="#555" stroke-width="1"/><path d="M1166.4 13.8 V15.2" stroke="#8a8a8a" stroke-width="1"/><path d="M1180.0 12.5 V15.2" stroke="#8a8a8a" stroke-width="1"/><path d="M1193.7 13.8 V15.2" stroke="#8a8a8a" stroke-width="1"/><path d="M1207.3 10.5 V15.2" stroke="#555" stroke-width="1"/><path d="M1220.9 13.8 V15.2" stroke="#8a8a8a" stroke-width="1"/><path d="M1234.6 12.5 V15.2" stroke="#8a8a8a" stroke-width="1"/><path d="M1248.2 13.8 V15.2" stroke="#8a8a8a" stroke-width="1"/><path d="M1261.9 10.5 V15.2" stroke="#555" stroke-width="1"/><path d="M1275.5 13.8 V15.2" stroke="#8a8a8a" stroke-width="1"/><path d="M1289.2 12.5 V15.2" stroke="#8a8a8a" stroke-width="1"/><path d="M1302.8 13.8 V15.2" stroke="#8a8a8a" stroke-width="1"/><path d="M1316.5 10.5 V15.2" stroke="#555" stroke-width="1"/><path d="M1330.1 13.8 V15.2" stroke="#8a8a8a" stroke-width="1"/><path d="M1343.8 12.5 V15.2" stroke="#8a8a8a" stroke-width="1"/><path d="M1357.4 13.8 V15.2" stroke="#8a8a8a" stroke-width="1"/><path d="M1371.1 10.5 V15.2" stroke="#555" stroke-width="1"/></svg>
<span class="t" style="left:60.9px;top:2px;width:60px;margin-left:-30px;text-align:center">1/2</span>
<span class="t" style="left:115.5px;top:2px;width:60px;margin-left:-30px;text-align:center">0</span>
<span class="t" style="left:170.1px;top:2px;width:60px;margin-left:-30px;text-align:center">1/2</span>
<span class="t" style="left:224.7px;top:2px;width:60px;margin-left:-30px;text-align:center">1</span>
<span class="t" style="left:279.3px;top:2px;width:60px;margin-left:-30px;text-align:center">1 1/2</span>
<span class="t" style="left:333.9px;top:2px;width:60px;margin-left:-30px;text-align:center">2</span>
<span class="t" style="left:388.5px;top:2px;width:60px;margin-left:-30px;text-align:center">2 1/2</span>
<span class="t" style="left:443.0px;top:2px;width:60px;margin-left:-30px;text-align:center">3</span>
<span class="t" style="left:497.6px;top:2px;width:60px;margin-left:-30px;text-align:center">3 1/2</span>
<span class="t" style="left:552.2px;top:2px;width:60px;margin-left:-30px;text-align:center">4</span>
<span class="t" style="left:606.8px;top:2px;width:60px;margin-left:-30px;text-align:center">4 1/2</span>
<span class="t" style="left:661.4px;top:2px;width:60px;margin-left:-30px;text-align:center">5</span>
<span class="t" style="left:716.0px;top:2px;width:60px;margin-left:-30px;text-align:center">5 1/2</span>
<span class="t" style="left:770.6px;top:2px;width:60px;margin-left:-30px;text-align:center">6</span>
<span class="t" style="left:825.2px;top:2px;width:60px;margin-left:-30px;text-align:center">6 1/2</span>
<span class="t" style="left:879.8px;top:2px;width:60px;margin-left:-30px;text-align:center">7</span>
<span class="t" style="left:934.4px;top:2px;width:60px;margin-left:-30px;text-align:center">7 1/2</span>
<span class="t" style="left:988.9px;top:2px;width:60px;margin-left:-30px;text-align:center">8</span>
<span class="t" style="left:1043.5px;top:2px;width:60px;margin-left:-30px;text-align:center">8 1/2</span>
<span class="t" style="left:1098.1px;top:2px;width:60px;margin-left:-30px;text-align:center">9</span>
<span class="t" style="left:1152.7px;top:2px;width:60px;margin-left:-30px;text-align:center">9 1/2</span>
<span class="t" style="left:1207.3px;top:2px;width:60px;margin-left:-30px;text-align:center">10</span>
<span class="t" style="left:1261.9px;top:2px;width:60px;margin-left:-30px;text-align:center">10 1/2</span>
<span class="t" style="left:1316.5px;top:2px;width:60px;margin-left:-30px;text-align:center">11</span>
<span class="t" style="left:1343px;top:2px">inches</span>
<div class="a" style="left:0;top:0;width:17px;height:18px;background:#f0f0f0"></div>
<svg style="left:3px;top:3px" width="12" height="12" viewBox="0 0 12 12"><path d="M1 3 H11 M3 1 V11 M3 3 L10 10 M10 10 V6.5 M10 10 H6.5" stroke="#888" stroke-width="1" fill="none"/></svg>
</div>
<div class="a" id="vruler" style="left:36px;top:184px;width:17px;height:802px;background:#f0f0f0;overflow:hidden;font-size:10px;color:#808080;word-spacing:2px">
<svg style="left:0;top:0" width="17" height="802"><path d="M9.5 14.3 H14.2" stroke="#555" stroke-width="1"/><path d="M12.8 27.9 H14.2" stroke="#8a8a8a" stroke-width="1"/><path d="M11.5 41.6 H14.2" stroke="#8a8a8a" stroke-width="1"/><path d="M12.8 55.2 H14.2" stroke="#8a8a8a" stroke-width="1"/><path d="M9.5 68.9 H14.2" stroke="#555" stroke-width="1"/><path d="M12.8 82.5 H14.2" stroke="#8a8a8a" stroke-width="1"/><path d="M11.5 96.2 H14.2" stroke="#8a8a8a" stroke-width="1"/><path d="M12.8 109.8 H14.2" stroke="#8a8a8a" stroke-width="1"/><path d="M9.5 123.5 H14.2" stroke="#555" stroke-width="1"/><path d="M12.8 137.1 H14.2" stroke="#8a8a8a" stroke-width="1"/><path d="M11.5 150.8 H14.2" stroke="#8a8a8a" stroke-width="1"/><path d="M12.8 164.4 H14.2" stroke="#8a8a8a" stroke-width="1"/><path d="M9.5 178.1 H14.2" stroke="#555" stroke-width="1"/><path d="M12.8 191.7 H14.2" stroke="#8a8a8a" stroke-width="1"/><path d="M11.5 205.4 H14.2" stroke="#8a8a8a" stroke-width="1"/><path d="M12.8 219.0 H14.2" stroke="#8a8a8a" stroke-width="1"/><path d="M9.5 232.7 H14.2" stroke="#555" stroke-width="1"/><path d="M12.8 246.3 H14.2" stroke="#8a8a8a" stroke-width="1"/><path d="M11.5 260.0 H14.2" stroke="#8a8a8a" stroke-width="1"/><path d="M12.8 273.6 H14.2" stroke="#8a8a8a" stroke-width="1"/><path d="M9.5 287.3 H14.2" stroke="#555" stroke-width="1"/><path d="M12.8 300.9 H14.2" stroke="#8a8a8a" stroke-width="1"/><path d="M11.5 314.5 H14.2" stroke="#8a8a8a" stroke-width="1"/><path d="M12.8 328.2 H14.2" stroke="#8a8a8a" stroke-width="1"/><path d="M9.5 341.8 H14.2" stroke="#555" stroke-width="1"/><path d="M12.8 355.5 H14.2" stroke="#8a8a8a" stroke-width="1"/><path d="M11.5 369.1 H14.2" stroke="#8a8a8a" stroke-width="1"/><path d="M12.8 382.8 H14.2" stroke="#8a8a8a" stroke-width="1"/><path d="M9.5 396.4 H14.2" stroke="#555" stroke-width="1"/><path d="M12.8 410.1 H14.2" stroke="#8a8a8a" stroke-width="1"/><path d="M11.5 423.7 H14.2" stroke="#8a8a8a" stroke-width="1"/><path d="M12.8 437.4 H14.2" stroke="#8a8a8a" stroke-width="1"/><path d="M9.5 451.0 H14.2" stroke="#555" stroke-width="1"/><path d="M12.8 464.7 H14.2" stroke="#8a8a8a" stroke-width="1"/><path d="M11.5 478.3 H14.2" stroke="#8a8a8a" stroke-width="1"/><path d="M12.8 492.0 H14.2" stroke="#8a8a8a" stroke-width="1"/><path d="M9.5 505.6 H14.2" stroke="#555" stroke-width="1"/><path d="M12.8 519.3 H14.2" stroke="#8a8a8a" stroke-width="1"/><path d="M11.5 532.9 H14.2" stroke="#8a8a8a" stroke-width="1"/><path d="M12.8 546.6 H14.2" stroke="#8a8a8a" stroke-width="1"/><path d="M9.5 560.2 H14.2" stroke="#555" stroke-width="1"/><path d="M12.8 573.8 H14.2" stroke="#8a8a8a" stroke-width="1"/><path d="M11.5 587.5 H14.2" stroke="#8a8a8a" stroke-width="1"/><path d="M12.8 601.1 H14.2" stroke="#8a8a8a" stroke-width="1"/><path d="M9.5 614.8 H14.2" stroke="#555" stroke-width="1"/><path d="M12.8 628.4 H14.2" stroke="#8a8a8a" stroke-width="1"/><path d="M11.5 642.1 H14.2" stroke="#8a8a8a" stroke-width="1"/><path d="M12.8 655.7 H14.2" stroke="#8a8a8a" stroke-width="1"/><path d="M9.5 669.4 H14.2" stroke="#555" stroke-width="1"/><path d="M12.8 683.0 H14.2" stroke="#8a8a8a" stroke-width="1"/><path d="M11.5 696.7 H14.2" stroke="#8a8a8a" stroke-width="1"/><path d="M12.8 710.3 H14.2" stroke="#8a8a8a" stroke-width="1"/><path d="M9.5 724.0 H14.2" stroke="#555" stroke-width="1"/><path d="M12.8 737.6 H14.2" stroke="#8a8a8a" stroke-width="1"/><path d="M11.5 751.3 H14.2" stroke="#8a8a8a" stroke-width="1"/><path d="M12.8 764.9 H14.2" stroke="#8a8a8a" stroke-width="1"/><path d="M9.5 778.6 H14.2" stroke="#555" stroke-width="1"/><path d="M12.8 792.2 H14.2" stroke="#8a8a8a" stroke-width="1"/></svg>
<span class="t" style="left:6px;top:14.3px;width:60px;height:10px;margin-left:-30px;margin-top:-5px;text-align:center;transform:rotate(-90deg)">12</span>
<span class="t" style="left:6px;top:68.9px;width:60px;height:10px;margin-left:-30px;margin-top:-5px;text-align:center;transform:rotate(-90deg)">11 1/2</span>
<span class="t" style="left:6px;top:123.5px;width:60px;height:10px;margin-left:-30px;margin-top:-5px;text-align:center;transform:rotate(-90deg)">11</span>
<span class="t" style="left:6px;top:178.1px;width:60px;height:10px;margin-left:-30px;margin-top:-5px;text-align:center;transform:rotate(-90deg)">10 1/2</span>
<span class="t" style="left:6px;top:232.7px;width:60px;height:10px;margin-left:-30px;margin-top:-5px;text-align:center;transform:rotate(-90deg)">10</span>
<span class="t" style="left:6px;top:287.3px;width:60px;height:10px;margin-left:-30px;margin-top:-5px;text-align:center;transform:rotate(-90deg)">9 1/2</span>
<span class="t" style="left:6px;top:341.8px;width:60px;height:10px;margin-left:-30px;margin-top:-5px;text-align:center;transform:rotate(-90deg)">9</span>
<span class="t" style="left:6px;top:396.4px;width:60px;height:10px;margin-left:-30px;margin-top:-5px;text-align:center;transform:rotate(-90deg)">8 1/2</span>
<span class="t" style="left:6px;top:451.0px;width:60px;height:10px;margin-left:-30px;margin-top:-5px;text-align:center;transform:rotate(-90deg)">8</span>
<span class="t" style="left:6px;top:505.6px;width:60px;height:10px;margin-left:-30px;margin-top:-5px;text-align:center;transform:rotate(-90deg)">7 1/2</span>
<span class="t" style="left:6px;top:560.2px;width:60px;height:10px;margin-left:-30px;margin-top:-5px;text-align:center;transform:rotate(-90deg)">7</span>
<span class="t" style="left:6px;top:614.8px;width:60px;height:10px;margin-left:-30px;margin-top:-5px;text-align:center;transform:rotate(-90deg)">6 1/2</span>
<span class="t" style="left:6px;top:669.4px;width:60px;height:10px;margin-left:-30px;margin-top:-5px;text-align:center;transform:rotate(-90deg)">6</span>
<span class="t" style="left:6px;top:724.0px;width:60px;height:10px;margin-left:-30px;margin-top:-5px;text-align:center;transform:rotate(-90deg)">5 1/2</span>
<span class="t" style="left:6px;top:784px;width:60px;height:10px;margin-left:-30px;margin-top:-5px;text-align:center;transform:rotate(-90deg)">inches</span>
</div>
<div class="a" id="canvas" style="left:53px;top:184px;width:1357px;height:802px;background:#fff;overflow:hidden">
<svg style="left:0;top:0" width="1357" height="802" viewBox="53 184 1357 802">
<defs>
<linearGradient id="bgG" x1="0" y1="0" x2="1" y2="1"><stop offset="0.000" stop-color="#189ba2"/><stop offset="0.200" stop-color="#178296"/><stop offset="0.350" stop-color="#156284"/><stop offset="0.500" stop-color="#14486d"/><stop offset="0.727" stop-color="#133e67"/><stop offset="0.840" stop-color="#162e5d"/><stop offset="1.000" stop-color="#17144d"/></linearGradient>
<radialGradient id="glowG" cx="0.5" cy="0.5" r="0.5"><stop offset="0" stop-color="#1c96a5" stop-opacity="0.7"/><stop offset="0.5" stop-color="#1c96a5" stop-opacity="0.36"/><stop offset="1" stop-color="#1c96a5" stop-opacity="0"/></radialGradient>
<linearGradient id="lsG" x1="0" y1="0" x2="0" y2="1"><stop offset="0" stop-color="#41a07f"/><stop offset="0.5" stop-color="#296c58"/><stop offset="1" stop-color="#12382b"/></linearGradient>
<linearGradient id="rsG" x1="0" y1="0" x2="0" y2="1"><stop offset="0" stop-color="#67fac9"/><stop offset="0.5" stop-color="#57d4ad"/><stop offset="1" stop-color="#389477"/></linearGradient>
<radialGradient id="bubG" cx="0.68" cy="0.3" r="0.75"><stop offset="0" stop-color="#237f95"/><stop offset="0.45" stop-color="#3e9fb0"/><stop offset="0.8" stop-color="#6fd0d8"/><stop offset="1" stop-color="#8ae6e8"/></radialGradient>
<radialGradient id="bubG2" cx="0.8" cy="0.55" r="0.85"><stop offset="0" stop-color="#1d6c8b"/><stop offset="0.45" stop-color="#3c98ad"/><stop offset="0.8" stop-color="#72d2da"/><stop offset="1" stop-color="#8ae6e8"/></radialGradient>
<linearGradient id="fade1" gradientUnits="userSpaceOnUse" x1="0" y1="700" x2="0" y2="815"><stop offset="0" stop-color="#c2c0f7"/><stop offset="1" stop-color="#c2c0f7" stop-opacity="0"/></linearGradient>
<linearGradient id="fade2" gradientUnits="userSpaceOnUse" x1="0" y1="720" x2="0" y2="835"><stop offset="0" stop-color="#c2c0f7"/><stop offset="1" stop-color="#c2c0f7" stop-opacity="0"/></linearGradient>
<linearGradient id="fade3" gradientUnits="userSpaceOnUse" x1="0" y1="740" x2="0" y2="848"><stop offset="0" stop-color="#c2c0f7"/><stop offset="1" stop-color="#c2c0f7" stop-opacity="0"/></linearGradient>
<linearGradient id="fade4" gradientUnits="userSpaceOnUse" x1="0" y1="735" x2="0" y2="798"><stop offset="0" stop-color="#c2c0f7"/><stop offset="1" stop-color="#c2c0f7" stop-opacity="0"/></linearGradient>
<linearGradient id="wingG" x1="0" y1="0" x2="1" y2="0"><stop offset="0" stop-color="#8af0ea" stop-opacity="0.95"/><stop offset="0.6" stop-color="#86ece6" stop-opacity="0.85"/><stop offset="1" stop-color="#86ece6" stop-opacity="0.55"/></linearGradient>
<filter id="rough" x="-20%" y="-20%" width="140%" height="140%"><feTurbulence type="fractalNoise" baseFrequency="0.35" numOctaves="2" seed="3" result="n"/><feDisplacementMap in="SourceGraphic" in2="n" scale="9" xChannelSelector="R" yChannelSelector="G"/></filter>
<filter id="blurS" x="-5%" y="-5%" width="110%" height="110%"><feGaussianBlur stdDeviation="0.75"/></filter>
<filter id="rough2" x="-30%" y="-30%" width="160%" height="160%"><feTurbulence type="fractalNoise" baseFrequency="0.5" numOctaves="2" seed="9" result="n"/><feDisplacementMap in="SourceGraphic" in2="n" scale="22" xChannelSelector="R" yChannelSelector="G"/></filter>
<filter id="spkS" filterUnits="userSpaceOnUse" x="330" y="120" width="880" height="260"><feTurbulence type="fractalNoise" baseFrequency="0.09" numOctaves="2" seed="4" result="d"/><feDisplacementMap in="SourceGraphic" in2="d" scale="26" xChannelSelector="R" yChannelSelector="G" result="g"/><feTurbulence type="fractalNoise" baseFrequency="0.8" numOctaves="2" seed="11" result="n"/><feColorMatrix in="n" type="matrix" values="0 0 0 0 1 0 0 0 0 1 0 0 0 0 1 7 0 0 0 -3.9" result="a"/><feComposite in="g" in2="a" operator="in"/></filter>
<filter id="spkM" filterUnits="userSpaceOnUse" x="330" y="120" width="880" height="260"><feTurbulence type="fractalNoise" baseFrequency="0.12" numOctaves="2" seed="8" result="d"/><feDisplacementMap in="SourceGraphic" in2="d" scale="16" xChannelSelector="R" yChannelSelector="G" result="g"/><feTurbulence type="fractalNoise" baseFrequency="0.7" numOctaves="2" seed="21" result="n"/><feColorMatrix in="n" type="matrix" values="0 0 0 0 1 0 0 0 0 1 0 0 0 0 1 6 0 0 0 -2.5" result="a"/><feComposite in="g" in2="a" operator="in"/></filter>
<filter id="spkC" filterUnits="userSpaceOnUse" x="330" y="120" width="880" height="260"><feTurbulence type="fractalNoise" baseFrequency="0.2" numOctaves="2" seed="2" result="d"/><feDisplacementMap in="SourceGraphic" in2="d" scale="9" xChannelSelector="R" yChannelSelector="G" result="g"/><feTurbulence type="fractalNoise" baseFrequency="0.6" numOctaves="2" seed="31" result="n"/><feColorMatrix in="n" type="matrix" values="0 0 0 0 1 0 0 0 0 1 0 0 0 0 1 6 0 0 0 -1.3" result="a"/><feComposite in="g" in2="a" operator="in"/></filter>
<filter id="blur2" x="-10%" y="-30%" width="120%" height="160%"><feGaussianBlur stdDeviation="2.2"/></filter>
<filter id="blurL" x="-5%" y="-5%" width="110%" height="110%"><feGaussianBlur stdDeviation="1"/></filter>
<filter id="blur1"><feGaussianBlur stdDeviation="0.7"/></filter>
<filter id="blur3"><feGaussianBlur stdDeviation="3"/></filter>
<clipPath id="artClip"><rect x="205.5" y="184" width="1092.5" height="782.5"/></clipPath>
</defs>
<rect x="1352" y="184" width="6" height="782.5" fill="#bdbdbd"/>
<rect x="151.5" y="184" width="55" height="782.5" fill="url(#lsG)"/>
<rect x="1297" y="184" width="55.5" height="782.5" fill="url(#rsG)"/>
<rect x="205.5" y="184" width="1092.5" height="782.5" fill="url(#bgG)"/>
<g clip-path="url(#artClip)">
<ellipse cx="820" cy="184" rx="430" ry="340" fill="url(#glowG)"/>
<g fill="none" stroke="#a6e8ee" stroke-linecap="round" filter="url(#blurL)"><path d="M214.7 447.4h0M261.1 389.6h0M234.2 385.1h0M250.9 425.8h0M255.6 372.6h0M270.8 512.7h0M247.4 339.2h0M256.9 393.5h0M291.8 285.0h0M226.9 357.4h0" stroke-width="1.5" opacity="0.4"/><path d="M260.5 515.7h0M236.0 460.6h0M290.6 426.7h0M289.2 416.3h0" stroke-width="1.5" opacity="0.6"/><path d="M231.2 369.2h0M290.4 421.4h0" stroke-width="1.5" opacity="0.8"/><path d="M218.9 398.5h0M212.6 308.7h0M235.7 456.3h0M260.2 379.8h0M214.0 370.6h0M274.7 461.7h0" stroke-width="2.0" opacity="0.4"/><path d="M221.9 298.1h0M241.5 316.5h0M264.8 491.7h0M267.4 351.1h0M289.3 422.3h0M279.1 477.0h0M270.4 301.8h0M258.6 490.3h0M263.2 453.3h0M228.6 467.2h0" stroke-width="2.0" opacity="0.6"/><path d="M242.1 434.4h0" stroke-width="2.0" opacity="0.8"/><path d="M247.9 254.0h0M266.8 379.5h0M222.9 404.1h0M294.1 328.5h0M243.6 329.2h0M262.8 482.3h0M224.8 315.5h0M279.8 415.2h0M292.6 311.5h0M261.9 500.4h0M268.1 234.3h0" stroke-width="2.5" opacity="0.4"/><path d="M233.9 325.5h0M236.5 373.0h0M297.8 430.0h0M271.7 505.4h0M273.3 410.5h0M259.7 370.4h0" stroke-width="2.5" opacity="0.6"/><path d="M287.5 340.5h0M221.1 246.5h0M282.7 543.2h0M236.7 460.1h0" stroke-width="2.5" opacity="0.8"/><path d="M270.6 402.5h0M277.0 396.3h0M270.1 399.3h0M225.2 317.7h0M242.8 380.2h0M226.4 477.4h0" stroke-width="3.0" opacity="0.4"/><path d="M288.5 355.2h0M223.9 421.5h0M264.4 434.8h0M245.2 369.2h0M211.1 365.3h0M211.6 364.2h0M298.1 419.8h0M221.0 236.9h0M283.9 487.1h0" stroke-width="3.0" opacity="0.6"/><path d="M214.7 324.9h0M230.9 270.3h0M230.8 251.9h0M266.5 374.3h0" stroke-width="3.0" opacity="0.8"/><path d="M217.3 375.9h0M293.9 405.0h0M217.6 335.2h0M209.7 328.9h0M226.5 434.5h0M237.1 573.7h0M219.6 433.9h0M287.7 411.4h0M299.1 464.6h0M264.7 404.4h0M232.5 454.8h0" stroke-width="3.5" opacity="0.4"/><path d="M232.0 377.2h0M259.5 328.1h0M283.3 404.4h0M231.5 292.7h0M229.4 468.0h0M258.5 523.6h0M296.7 311.1h0M237.1 339.4h0M236.5 349.6h0M226.9 271.5h0" stroke-width="3.5" opacity="0.6"/><path d="M277.0 423.4h0M250.1 453.9h0" stroke-width="3.5" opacity="0.8"/><path d="M284.3 292.0h0M297.4 389.3h0M234.7 379.5h0M220.8 304.8h0M212.5 421.5h0M218.0 428.6h0" stroke-width="4.0" opacity="0.4"/><path d="M258.5 279.4h0M231.9 398.9h0M288.9 386.6h0M249.3 336.5h0M267.3 343.8h0M239.6 348.6h0M291.3 431.3h0" stroke-width="4.0" opacity="0.6"/><path d="M265.4 437.6h0M230.9 390.9h0M276.0 434.5h0M273.9 377.7h0" stroke-width="4.0" opacity="0.8"/><path d="M292.4 433.2h0" stroke-width="4.5" opacity="0.6"/><path d="M244.1 390.6h0M261.6 386.1h0" stroke-width="5.0" opacity="0.4"/><path d="M276.8 433.7h0" stroke-width="5.5" opacity="0.6"/><path d="M271.5 438.9h0" stroke-width="5.5" opacity="0.8"/><path d="M219.9 327.8h0" stroke-width="6.0" opacity="0.6"/><path d="M272.8 448.2h0" stroke-width="6.0" opacity="0.8"/></g>
<circle cx="293" cy="684" r="55" fill="url(#bubG2)"/>
<circle cx="357" cy="810" r="123" fill="url(#bubG)"/>
<circle cx="275" cy="1028" r="83" fill="url(#bubG)"/>
<g fill="#fff"><circle cx="278" cy="658.8" r="13.8"/><circle cx="261.6" cy="687.6" r="4"/><circle cx="274.6" cy="787" r="16"/><circle cx="273" cy="811" r="4"/><circle cx="259" cy="816" r="4"/></g>
<g fill="none" stroke="#e8f6f8" stroke-linecap="round" filter="url(#blurS)"><path d="M315.1 825.2h0M430.7 829.1h0M329.7 878.9h0M504.0 920.1h0M589.8 861.5h0M337.7 933.3h0" stroke-width="1.5" opacity="0.4"/><path d="M336.3 870.7h0M501.7 952.5h0M255.6 916.0h0M304.3 847.1h0M502.6 864.4h0M325.1 871.5h0M461.3 949.6h0M423.7 888.5h0M346.2 810.1h0M297.1 937.4h0M607.1 965.3h0M361.5 844.4h0M469.5 964.2h0M360.1 936.1h0M471.1 927.6h0M505.2 880.8h0M351.0 898.9h0M472.3 956.9h0M353.2 865.5h0M420.7 863.6h0M533.5 910.1h0" stroke-width="1.5" opacity="0.6"/><path d="M486.3 808.3h0M383.3 886.2h0M307.8 850.3h0M392.6 827.9h0M429.2 831.5h0M335.2 840.8h0M346.9 841.5h0M395.3 884.6h0M510.2 860.9h0M584.2 916.2h0M468.2 895.1h0M360.1 887.3h0M359.2 918.1h0M485.8 964.5h0M589.5 905.3h0M369.0 846.6h0M456.8 861.8h0M417.2 863.5h0" stroke-width="1.5" opacity="0.8"/><path d="M306.8 905.9h0M455.0 931.6h0M504.8 818.9h0M414.3 912.7h0M717.3 849.4h0M633.7 935.7h0M433.2 909.7h0M344.2 956.4h0M346.0 811.6h0M430.8 814.2h0M455.9 956.8h0M512.9 962.1h0M516.5 830.0h0M363.1 890.6h0M271.1 878.6h0M435.1 931.7h0M410.2 890.9h0M227.2 845.5h0M534.0 856.9h0M556.4 846.8h0M481.4 930.7h0M617.7 850.7h0M483.3 868.1h0M508.2 962.8h0M453.9 910.3h0M486.5 959.2h0M285.5 820.4h0M676.5 925.2h0M206.1 869.5h0M421.0 877.6h0M260.0 925.0h0M336.3 815.2h0M397.5 916.9h0M294.0 910.8h0M516.9 890.0h0M554.8 847.5h0M574.1 858.4h0M386.5 830.7h0M334.9 947.5h0M433.3 938.4h0M501.0 902.6h0M416.6 923.0h0" stroke-width="2.0" opacity="0.4"/><path d="M458.3 881.6h0M361.0 916.7h0M446.6 848.9h0M508.9 831.4h0M451.0 944.8h0M445.7 888.6h0M387.9 828.1h0M385.3 874.7h0M307.3 916.5h0M408.2 944.9h0M665.5 897.8h0M252.2 804.6h0M477.1 935.0h0M451.9 932.5h0M309.2 894.7h0M307.4 853.3h0M404.2 960.0h0M407.8 933.8h0M529.4 823.0h0M303.6 866.9h0M439.9 817.0h0M450.8 936.4h0M601.2 801.2h0M316.5 844.2h0M683.5 893.0h0M479.4 938.3h0M378.7 927.3h0M276.2 935.2h0M490.8 867.3h0M522.0 893.5h0M430.5 911.8h0M432.4 926.6h0M359.7 845.6h0M539.8 914.1h0M315.0 855.9h0M307.0 932.8h0M405.6 927.8h0M266.0 924.7h0M386.2 882.7h0M459.9 925.6h0M291.0 831.9h0M428.6 811.4h0M542.1 818.8h0M285.8 909.4h0M320.0 803.9h0M372.5 932.2h0M364.5 817.5h0M459.5 932.1h0M635.4 899.9h0M293.3 853.3h0M334.3 959.0h0M519.2 908.4h0M365.6 841.7h0M318.8 804.7h0M469.8 871.4h0M415.0 892.1h0M443.1 887.8h0M431.2 877.5h0M430.6 875.3h0M495.3 861.1h0M427.1 931.9h0M426.6 862.0h0M289.0 839.2h0M423.9 937.1h0M333.9 820.3h0M418.6 957.3h0M629.2 810.9h0M474.9 914.1h0M301.7 863.6h0M523.4 816.8h0M355.4 903.9h0M391.2 843.6h0" stroke-width="2.0" opacity="0.6"/><path d="M250.3 947.5h0M392.3 954.2h0M330.5 921.8h0M538.4 963.6h0M318.2 894.8h0M415.0 847.9h0M405.4 873.0h0M382.4 888.0h0M433.9 938.8h0M497.8 851.6h0M347.8 842.8h0M578.2 854.6h0M299.5 956.0h0M399.8 840.0h0M307.6 867.0h0M529.9 843.8h0M560.6 960.6h0M447.2 955.5h0M365.9 910.0h0M445.5 902.8h0M570.1 904.6h0M337.9 921.2h0M479.9 941.9h0M367.3 804.8h0M367.4 961.7h0M461.5 878.4h0M373.6 954.0h0M443.4 926.1h0M482.3 888.5h0M307.6 851.6h0M382.7 960.4h0M619.5 962.3h0M353.0 877.2h0M442.8 887.4h0M371.5 843.3h0M372.7 852.4h0M613.0 820.1h0M257.5 932.2h0M293.1 840.1h0M323.0 807.9h0M513.9 819.6h0M379.2 873.3h0M470.4 817.3h0M250.1 818.6h0M518.4 909.0h0M397.2 885.1h0M485.1 858.7h0M414.7 919.8h0M226.2 891.5h0M539.2 928.9h0M355.9 875.0h0M509.5 839.9h0M439.9 952.6h0M507.8 866.3h0M290.3 842.5h0M419.3 839.5h0M577.7 937.5h0M566.2 888.1h0M411.5 874.2h0M561.4 864.3h0M509.9 928.7h0M334.7 911.7h0M251.9 939.3h0M368.4 847.0h0M561.8 806.1h0M393.5 837.4h0" stroke-width="2.0" opacity="0.8"/><path d="M377.9 827.9h0M321.0 830.3h0M286.1 917.2h0M335.3 881.2h0M453.5 861.0h0M372.7 907.3h0M473.6 839.4h0M356.9 838.6h0M273.8 895.9h0M341.2 931.4h0M608.1 944.4h0M273.4 905.7h0M447.1 919.3h0M253.0 949.8h0M654.2 919.0h0M246.9 943.3h0M333.1 885.7h0M625.1 826.5h0M346.0 835.2h0M497.4 812.8h0M613.3 821.0h0M602.3 885.9h0M555.9 897.2h0M381.2 950.7h0M643.5 885.9h0M363.5 950.2h0M311.7 877.6h0M414.1 815.3h0M591.2 890.6h0M254.1 849.1h0M423.2 965.3h0M509.1 832.8h0M282.2 802.6h0M530.1 899.8h0M451.6 874.1h0" stroke-width="2.5" opacity="0.4"/><path d="M423.1 892.0h0M269.2 881.9h0M328.6 892.4h0M462.8 873.7h0M307.1 882.6h0M418.1 909.4h0M370.6 861.2h0M346.2 845.4h0M528.3 837.2h0M310.4 926.0h0M691.4 909.0h0M421.2 900.4h0M439.6 934.4h0M380.8 855.0h0M618.6 806.3h0M433.1 917.3h0M504.8 947.2h0M541.9 885.1h0M374.1 940.8h0M387.4 862.8h0M447.8 949.3h0M343.5 946.2h0M288.8 920.5h0M334.0 953.7h0M468.2 820.3h0M293.0 884.8h0M350.5 923.6h0M387.6 934.9h0M599.9 850.9h0M271.4 863.9h0M497.4 943.2h0M509.8 890.1h0M383.7 929.9h0M216.3 882.0h0M585.5 881.8h0M351.8 952.4h0M448.4 948.0h0M454.8 909.2h0M486.3 946.0h0M320.9 880.2h0M609.0 912.9h0M395.8 801.1h0M273.8 908.4h0M454.3 836.2h0M278.1 951.4h0M345.0 954.7h0M360.0 926.9h0M300.9 889.9h0M414.6 912.8h0M429.0 817.5h0M331.7 914.5h0M410.9 964.0h0M457.4 873.7h0M283.0 896.3h0M605.3 879.6h0M284.4 945.0h0M428.8 874.4h0M655.0 910.4h0M271.6 840.2h0M456.8 938.4h0M483.1 911.6h0M404.1 877.0h0M602.2 887.7h0M496.0 944.8h0M326.2 882.4h0M331.9 927.8h0M352.1 894.9h0M479.8 876.0h0M328.4 823.7h0M427.2 844.9h0M280.8 862.5h0M400.9 932.3h0M440.8 941.6h0M517.1 892.5h0M401.7 941.9h0M508.1 880.7h0" stroke-width="2.5" opacity="0.6"/><path d="M373.9 886.7h0M501.0 924.4h0M422.2 915.9h0M338.6 850.1h0M353.1 842.8h0M406.8 892.2h0M340.0 949.3h0M358.6 810.9h0M389.9 868.3h0M489.1 867.4h0M534.9 953.2h0M483.9 814.7h0M609.0 918.0h0M278.2 832.9h0M325.3 832.9h0M411.7 885.0h0M363.2 807.3h0M642.8 940.8h0M601.5 829.5h0M447.7 922.9h0M395.0 949.9h0M494.8 918.1h0M449.0 958.8h0M412.5 933.2h0M570.9 954.3h0M316.3 908.6h0M405.2 855.7h0M378.2 844.2h0M348.3 962.4h0M501.4 853.5h0M264.8 909.0h0M268.1 826.5h0M334.7 849.8h0M264.6 837.1h0M276.4 936.3h0M343.6 930.7h0M479.7 906.0h0M334.5 896.0h0M347.7 929.9h0M374.0 841.3h0M227.6 937.9h0M379.8 950.8h0M336.9 861.0h0M253.5 918.4h0M659.4 883.1h0M248.2 924.6h0M245.1 927.7h0M493.5 961.0h0M687.5 881.0h0M483.2 949.8h0M529.3 911.0h0M292.6 939.2h0M556.0 818.3h0M334.3 883.4h0M541.8 891.0h0M466.6 926.8h0M378.3 865.4h0M378.8 954.2h0M430.5 874.9h0M375.5 965.2h0M474.9 837.8h0M381.8 900.6h0M507.8 876.2h0M321.6 828.4h0M365.3 822.2h0M416.5 809.2h0M554.4 836.7h0M278.3 954.3h0M307.3 852.7h0M550.6 898.4h0M514.3 809.0h0M501.1 903.6h0M394.4 958.2h0M346.8 867.9h0M350.0 955.5h0M249.4 835.8h0M427.5 952.5h0M251.8 921.5h0M408.7 952.8h0M425.5 913.3h0M430.4 931.6h0M286.4 823.8h0M448.6 940.6h0M572.7 891.2h0M266.8 821.9h0" stroke-width="2.5" opacity="0.8"/><path d="M542.4 929.2h0M486.9 960.9h0M247.2 914.2h0M228.4 900.2h0M421.4 961.5h0M449.3 919.8h0M434.7 945.8h0M221.7 929.2h0M367.2 904.1h0M248.1 836.0h0M337.4 839.3h0M380.2 841.2h0M339.2 845.8h0M464.4 895.4h0M348.6 883.5h0M512.0 842.4h0M432.4 964.8h0M367.4 891.4h0M384.6 921.5h0M395.5 829.8h0M547.7 896.8h0M459.4 881.5h0M382.1 895.1h0M384.9 883.0h0M500.9 943.3h0M388.4 919.0h0M299.1 896.6h0M430.3 870.5h0M466.9 889.6h0M479.2 864.4h0M428.8 900.4h0M334.9 941.4h0M320.7 846.7h0M388.0 900.8h0M634.8 908.5h0M415.7 917.9h0M430.6 893.4h0M475.8 844.2h0M546.8 839.8h0M521.8 850.8h0M259.3 899.5h0M321.3 935.0h0" stroke-width="3.0" opacity="0.4"/><path d="M411.1 931.3h0M236.0 877.5h0M326.3 900.7h0M309.4 917.9h0M365.6 840.2h0M518.2 863.0h0M472.0 885.9h0M315.2 944.8h0M351.6 909.8h0M397.2 896.4h0M362.3 926.7h0M252.2 935.1h0M463.4 818.7h0M443.6 939.4h0M338.1 833.5h0M491.8 808.5h0M461.2 954.4h0M266.4 877.7h0M563.2 850.4h0M378.4 886.7h0M443.3 832.8h0M572.6 800.3h0M539.5 870.3h0M454.2 856.0h0M300.0 895.9h0M349.3 818.2h0M494.3 869.1h0M348.8 882.5h0M465.0 919.4h0M488.6 934.9h0M340.5 903.0h0M393.9 817.8h0M428.2 893.1h0M363.3 902.7h0M409.8 928.5h0M520.8 858.1h0M263.0 828.9h0M448.9 913.8h0M262.1 929.4h0M491.0 952.5h0M365.3 941.4h0M245.7 957.7h0M452.0 823.4h0M451.1 924.4h0M500.7 922.0h0M338.2 954.6h0M344.2 900.9h0M569.4 900.3h0M451.6 893.3h0M468.6 908.9h0M419.5 965.3h0M441.5 897.5h0M385.4 894.7h0M420.4 942.1h0M285.9 881.8h0M681.4 826.4h0M340.3 866.7h0M323.8 934.8h0M436.6 962.7h0M383.1 831.7h0M634.4 952.8h0M386.8 897.2h0M509.9 937.4h0M351.0 849.4h0M429.1 856.1h0M507.0 910.5h0M362.4 829.6h0M475.6 916.6h0M503.5 909.0h0M514.3 946.6h0M258.0 887.1h0M582.9 854.0h0M421.3 934.6h0M345.7 838.9h0M273.7 926.0h0M442.4 802.4h0M467.8 950.0h0M386.6 922.0h0M403.5 858.1h0M272.6 946.9h0" stroke-width="3.0" opacity="0.6"/><path d="M366.9 904.3h0M469.3 906.1h0M331.9 850.1h0M392.7 907.1h0M351.6 800.3h0M405.8 869.8h0M342.6 912.6h0M461.9 959.8h0M260.8 816.6h0M550.6 839.5h0M293.0 910.6h0M523.6 861.7h0M274.7 856.2h0M551.5 932.7h0M588.8 856.7h0M401.7 939.4h0M574.8 871.3h0M680.9 834.4h0M368.3 883.8h0M424.5 858.4h0M556.5 923.6h0M392.2 957.6h0M427.4 825.9h0M624.7 878.6h0M497.3 925.0h0M380.2 804.3h0M245.1 875.1h0M458.6 865.6h0M212.2 815.6h0M497.4 845.8h0M470.7 847.8h0M582.6 911.0h0M290.6 904.5h0M393.0 946.3h0M509.0 937.1h0M473.3 927.4h0M319.7 917.8h0M341.4 953.0h0M354.4 842.5h0M602.7 850.7h0M491.2 854.1h0M473.3 907.5h0M348.7 902.7h0M548.4 911.6h0M471.4 835.5h0M485.7 932.5h0M440.6 940.4h0M579.3 910.7h0M266.4 837.3h0M475.2 929.9h0M319.6 965.4h0M462.7 885.4h0M305.5 815.8h0M363.3 955.6h0M433.6 918.5h0M562.0 965.8h0M394.7 912.9h0M445.5 933.4h0M480.3 858.4h0M335.2 954.5h0M517.0 807.4h0M433.5 940.8h0M491.4 932.4h0M308.6 884.7h0M481.0 881.8h0" stroke-width="3.0" opacity="0.8"/><path d="M440.0 903.2h0M574.6 801.9h0M336.6 806.3h0M279.4 836.8h0M290.5 849.1h0M453.5 829.9h0M612.7 838.4h0M354.0 927.5h0M278.8 826.3h0M397.1 926.4h0M329.6 942.2h0M336.5 937.9h0M451.7 905.3h0M254.9 952.7h0M431.8 830.7h0M543.3 814.6h0M442.5 845.7h0M306.2 905.4h0M461.8 861.8h0M397.7 906.2h0M302.5 879.3h0M492.0 922.9h0M315.5 955.3h0M262.3 906.2h0M406.8 906.0h0M492.2 920.6h0M266.5 898.8h0M453.0 895.2h0M403.6 835.1h0M402.7 813.1h0M312.2 959.7h0M347.7 866.6h0M338.4 928.3h0" stroke-width="3.5" opacity="0.4"/><path d="M645.7 921.1h0M346.8 941.3h0M307.1 813.2h0M465.5 831.2h0M371.0 910.0h0M273.9 845.9h0M298.4 939.4h0M271.6 926.5h0M435.0 894.4h0M505.8 813.3h0M455.6 947.9h0M510.4 965.1h0M521.0 912.4h0M458.5 885.0h0M571.5 880.1h0M407.2 805.5h0M322.8 953.5h0M356.1 947.8h0M611.3 939.2h0M520.7 845.7h0M403.5 934.8h0M551.9 918.5h0M623.1 876.0h0M636.3 919.0h0M339.4 960.1h0M295.3 838.3h0M289.3 937.5h0M305.1 896.7h0M355.5 906.2h0M320.0 852.8h0M394.0 941.4h0M264.0 853.5h0M391.5 866.7h0M339.0 907.0h0M364.7 912.7h0M414.8 948.0h0M447.6 821.7h0M443.8 918.5h0M336.0 804.0h0M418.6 941.1h0M322.4 917.0h0M384.6 933.9h0M328.9 876.3h0M643.5 914.4h0M360.1 922.0h0M472.5 962.9h0M550.3 861.5h0M492.2 854.5h0M247.3 928.3h0M295.3 914.5h0M313.5 884.4h0M409.8 942.4h0M295.5 880.5h0M666.3 899.0h0M337.8 867.0h0M498.0 892.7h0M324.6 808.7h0M499.4 849.0h0M337.4 849.9h0M380.0 907.9h0M435.1 843.1h0M295.0 899.9h0M710.6 835.5h0M712.2 964.8h0M603.9 855.0h0M459.9 803.5h0M480.5 834.5h0M436.1 835.2h0M345.9 876.9h0M567.0 877.5h0M473.7 924.5h0" stroke-width="3.5" opacity="0.6"/><path d="M322.2 960.0h0M376.1 852.6h0M441.3 926.6h0M394.9 895.4h0M567.5 937.3h0M496.1 866.8h0M697.9 964.7h0M318.2 866.3h0M275.8 871.1h0M355.8 918.0h0M549.3 895.9h0M315.5 837.2h0M491.7 936.3h0M473.3 875.6h0M507.7 909.8h0M318.6 863.8h0M302.0 890.8h0M369.6 925.8h0M345.0 824.6h0M574.4 884.8h0M326.2 930.2h0M395.8 844.8h0M428.4 884.3h0M520.7 943.1h0M658.6 962.4h0M513.0 855.9h0M649.7 816.7h0M270.0 940.8h0M617.4 899.3h0M351.7 924.5h0M361.0 921.0h0M337.6 940.7h0M493.1 873.8h0M341.6 893.1h0M453.6 951.0h0M597.9 814.5h0M568.2 801.2h0M461.6 842.9h0M538.1 864.6h0M369.2 888.5h0M317.4 867.4h0M263.9 886.1h0M365.3 870.0h0M466.2 941.0h0M571.6 874.4h0M477.0 848.9h0M591.6 903.4h0M297.2 928.0h0M362.2 948.1h0M497.6 807.2h0M449.2 895.2h0M624.3 932.2h0M488.7 835.1h0M252.7 950.3h0M558.7 883.8h0M262.4 934.5h0M303.1 945.1h0M302.9 873.8h0M347.2 925.5h0M213.1 832.2h0M411.8 808.0h0M437.5 939.5h0M368.3 913.5h0M495.0 927.2h0" stroke-width="3.5" opacity="0.8"/><path d="M293.6 800.2h0M258.2 823.7h0M365.9 921.1h0M356.9 962.5h0M474.8 916.6h0M602.9 826.3h0M581.9 845.3h0M640.7 930.6h0M436.1 924.7h0M390.9 916.1h0M402.9 908.3h0M475.8 839.8h0M433.5 814.3h0M523.8 850.3h0M359.3 892.0h0M343.7 861.0h0M291.3 807.5h0M467.9 824.8h0M432.5 872.6h0M622.5 838.0h0M435.4 962.6h0M457.0 829.2h0M504.0 874.0h0M256.0 939.8h0M380.7 821.2h0M464.9 839.4h0M331.5 851.0h0M499.4 852.2h0M531.9 823.3h0M466.2 924.4h0M347.4 902.8h0M437.0 896.7h0M404.7 835.0h0M312.6 923.4h0" stroke-width="4.0" opacity="0.4"/><path d="M278.9 900.2h0M478.8 923.2h0M446.5 893.4h0M394.2 878.8h0M311.9 901.7h0M387.2 912.1h0M412.1 893.2h0M557.7 857.9h0M264.8 848.0h0M381.5 926.8h0M462.5 905.6h0M357.8 867.7h0M548.1 854.7h0M340.8 852.0h0M312.4 816.7h0M293.2 956.3h0M499.2 914.4h0M466.5 964.1h0M393.0 962.0h0M590.2 906.5h0M422.2 962.4h0M447.7 892.8h0M387.8 956.0h0M506.9 862.9h0M392.9 920.0h0M474.8 818.5h0M568.3 960.4h0M322.7 811.7h0M472.5 880.3h0M300.2 951.1h0M377.0 864.3h0M217.2 832.1h0M390.0 850.9h0M323.9 855.9h0M317.9 929.7h0M232.0 841.2h0M424.4 862.2h0M304.3 917.6h0M502.6 862.9h0M398.3 937.6h0M594.4 881.2h0M705.6 815.0h0M285.0 938.1h0M387.6 915.1h0M659.1 829.0h0M696.3 898.7h0M442.6 878.0h0M343.4 938.5h0M417.1 860.0h0M281.1 843.2h0M355.8 875.8h0M556.6 896.0h0M398.0 906.1h0M422.0 883.9h0M490.0 833.2h0M302.0 855.7h0M470.7 898.0h0M619.1 853.1h0M395.9 887.3h0M324.2 907.9h0M240.6 902.7h0M525.0 860.8h0M400.0 949.3h0M470.2 932.9h0M469.0 940.9h0M473.7 824.1h0M305.4 935.1h0M308.7 945.8h0M535.1 907.6h0M392.9 854.0h0M324.9 905.3h0M488.3 866.5h0M477.2 857.4h0M316.4 878.1h0M411.1 856.9h0M371.9 899.2h0M416.3 884.5h0M559.5 868.9h0M329.1 939.8h0M378.8 904.0h0M649.9 812.2h0M422.1 867.4h0M411.5 916.2h0M469.6 955.0h0M394.9 912.2h0M447.4 892.7h0M309.5 882.3h0M368.4 911.7h0" stroke-width="4.0" opacity="0.6"/><path d="M326.1 876.5h0M385.1 854.2h0M314.0 913.6h0M456.0 894.2h0M529.0 875.1h0M620.6 810.3h0M230.3 840.6h0M408.3 924.1h0M423.9 954.4h0M278.9 893.5h0M425.0 947.5h0M543.9 899.9h0M679.6 826.9h0M601.4 927.8h0M422.0 808.5h0M457.3 896.9h0M298.6 953.1h0M552.9 849.0h0M426.9 912.7h0M558.3 917.9h0M396.0 959.8h0M383.5 940.1h0M483.0 845.8h0M418.8 911.1h0M258.9 845.9h0M290.2 954.4h0M311.8 884.2h0M305.7 911.2h0M330.4 930.9h0M325.7 830.9h0M325.4 916.9h0M358.7 816.7h0M208.2 869.3h0M408.9 844.6h0M400.3 811.4h0M480.7 896.6h0M466.9 852.1h0M462.8 859.0h0M666.1 854.2h0M357.1 895.7h0M310.4 830.8h0M249.4 878.2h0M648.1 946.4h0M617.1 945.9h0M307.5 931.0h0M378.4 965.0h0M277.7 924.0h0M518.1 923.8h0M360.6 912.5h0M481.8 897.4h0M536.6 857.6h0M400.1 911.6h0M291.5 899.8h0M590.5 944.9h0M415.8 857.1h0M430.5 815.6h0M603.2 838.7h0M386.7 865.8h0M361.1 800.2h0M524.1 889.6h0M419.6 895.1h0M301.3 933.1h0M497.4 847.4h0M496.2 876.3h0M343.5 963.7h0M387.5 821.8h0M297.1 952.2h0M283.8 886.8h0M301.7 815.2h0M328.7 946.3h0" stroke-width="4.0" opacity="0.8"/><path d="M492.5 944.5h0M215.4 925.7h0M533.3 846.2h0M489.2 953.0h0M409.5 956.6h0M464.9 938.9h0M624.8 845.7h0M450.9 923.6h0M530.2 851.9h0M412.8 886.4h0M394.5 958.0h0M444.4 920.9h0M486.5 913.4h0M486.1 868.0h0M344.3 920.1h0M406.3 803.9h0M328.2 945.2h0M696.5 906.4h0M495.3 937.5h0M320.3 961.0h0M431.9 819.2h0" stroke-width="4.5" opacity="0.4"/><path d="M531.4 802.5h0M556.9 954.6h0M513.4 866.0h0M408.1 874.4h0M334.8 886.4h0M372.5 940.0h0M399.7 959.1h0M503.5 953.5h0M443.4 952.9h0M289.3 922.6h0M561.7 928.6h0M412.6 912.7h0M469.0 957.4h0M379.7 820.5h0M452.5 882.3h0M551.7 960.9h0M282.6 926.3h0M285.5 850.7h0M603.2 862.2h0M507.3 917.9h0M230.1 923.2h0M534.2 879.8h0M401.5 952.6h0M580.0 900.6h0M478.0 959.4h0M341.6 911.1h0M646.9 801.7h0M530.1 873.0h0M498.8 925.0h0M273.0 847.4h0M370.3 952.9h0M447.5 931.4h0M426.6 963.3h0M429.5 883.1h0M334.2 912.0h0M262.1 903.6h0M346.6 962.4h0M400.6 806.4h0M438.2 929.9h0M384.3 954.1h0M346.7 829.7h0M453.7 936.7h0M484.9 940.6h0M417.2 831.4h0M493.2 905.9h0M338.9 920.6h0M511.7 837.5h0" stroke-width="4.5" opacity="0.6"/><path d="M464.9 845.1h0M515.0 851.2h0M465.5 803.5h0M450.3 930.3h0M630.6 885.1h0M529.2 830.2h0M364.6 920.6h0M542.9 928.5h0M503.7 946.6h0M467.5 867.7h0M463.9 947.8h0M359.7 959.5h0M245.0 903.6h0M313.6 841.8h0M478.9 907.9h0M434.7 920.9h0M348.7 801.6h0M368.6 862.5h0M280.5 912.8h0M319.7 950.5h0M391.2 900.4h0M402.9 872.3h0M498.7 885.6h0M329.7 923.3h0M485.1 954.1h0M398.9 868.8h0M591.2 899.7h0M417.0 924.6h0M269.7 869.4h0M402.0 845.1h0M330.5 963.0h0M310.0 942.1h0M381.0 857.9h0M267.9 853.9h0M237.0 872.2h0M372.7 868.8h0M572.3 931.7h0M254.8 924.6h0M403.4 891.7h0M545.3 886.7h0M339.4 834.2h0M280.4 898.2h0M216.7 945.5h0M407.8 908.3h0M411.8 870.1h0M718.2 846.5h0M465.8 913.4h0M486.8 898.5h0M621.4 960.4h0M540.0 825.3h0M491.9 962.7h0M330.6 940.7h0M375.1 911.1h0M276.3 949.7h0M321.2 808.0h0M318.8 870.8h0M447.1 897.2h0" stroke-width="4.5" opacity="0.8"/><path d="M265.1 888.6h0M563.3 891.1h0" stroke-width="5.0" opacity="0.4"/><path d="M388.7 809.4h0M469.8 897.7h0M389.3 933.3h0M547.1 945.0h0M320.1 958.2h0M489.4 963.5h0" stroke-width="5.0" opacity="0.6"/><path d="M378.3 939.8h0M399.7 896.1h0M542.3 837.2h0M299.4 855.1h0M306.4 940.3h0M397.0 940.5h0" stroke-width="5.0" opacity="0.8"/><path d="M423.0 905.0h0M386.5 957.4h0M448.4 934.9h0M210.8 891.6h0" stroke-width="5.5" opacity="0.6"/><path d="M460.3 885.2h0M512.1 876.6h0M418.0 804.5h0M336.0 883.8h0M558.7 822.3h0" stroke-width="5.5" opacity="0.8"/><path d="M402.0 918.2h0M638.1 897.9h0" stroke-width="6.0" opacity="0.4"/><path d="M417.5 930.7h0M371.4 867.6h0M243.7 925.0h0M547.2 858.0h0" stroke-width="6.0" opacity="0.6"/><path d="M292.6 839.6h0" stroke-width="6.0" opacity="0.8"/><path d="M495.4 928.6h0M342.4 953.4h0M298.5 825.3h0M441.0 938.1h0" stroke-width="6.5" opacity="0.6"/><path d="M558.6 825.7h0M355.6 865.9h0M568.1 811.0h0" stroke-width="6.5" opacity="0.8"/><path d="M380.6 898.7h0M400.6 963.8h0M493.3 940.9h0M523.7 840.5h0M382.3 950.7h0M530.4 828.3h0" stroke-width="7.0" opacity="0.6"/><path d="M370.7 945.5h0M236.4 955.2h0M394.4 856.8h0" stroke-width="7.0" opacity="0.8"/><path d="M441.0 833.4h0M300.0 945.2h0M221.4 817.1h0M436.3 800.8h0" stroke-width="7.5" opacity="0.6"/><path d="M371.0 832.9h0M618.8 856.1h0M504.1 913.8h0M656.2 853.7h0M386.6 847.8h0M638.5 964.4h0" stroke-width="7.5" opacity="0.8"/><path d="M214.8 876.3h0" stroke-width="8.0" opacity="0.8"/></g>
<g fill="none" stroke="#e8f6f8" stroke-linecap="round" filter="url(#blurS)"><path d="M308.9 907.1h0M240.8 964.9h0M336.1 836.2h0M283.5 865.6h0" stroke-width="1.0" opacity="0.2"/><path d="M424.2 928.7h0M297.9 868.3h0M398.1 956.6h0M232.4 839.4h0M239.0 877.3h0M394.1 886.8h0M284.0 884.2h0M446.6 954.0h0M240.1 843.4h0M371.6 959.1h0M386.9 883.6h0M296.8 954.5h0" stroke-width="1.0" opacity="0.4"/><path d="M492.0 874.9h0M402.4 865.7h0" stroke-width="1.0" opacity="0.6"/><path d="M391.2 862.5h0M236.9 860.5h0M351.3 890.6h0M221.9 872.4h0" stroke-width="1.5" opacity="0.2"/><path d="M289.3 845.8h0M313.5 898.4h0M410.2 956.7h0M574.4 891.0h0M328.4 864.4h0M435.0 927.2h0M448.0 896.7h0M283.3 834.7h0M239.7 852.7h0M253.9 963.2h0M601.7 828.0h0M250.0 885.2h0M301.2 946.4h0M253.2 881.1h0M472.7 896.6h0M310.6 914.4h0M317.8 904.6h0M251.5 850.9h0M213.4 934.8h0M232.4 933.0h0M402.4 892.5h0" stroke-width="1.5" opacity="0.4"/><path d="M297.4 827.2h0M482.2 890.4h0M209.8 944.8h0M264.3 843.8h0M645.9 868.5h0M332.4 844.6h0M609.8 930.5h0M277.5 884.3h0" stroke-width="1.5" opacity="0.6"/><path d="M344.0 943.5h0M315.5 929.2h0M244.1 928.1h0M369.6 944.2h0M226.0 904.8h0M339.7 895.5h0M432.4 869.9h0M305.6 893.7h0M255.5 875.4h0M256.4 845.2h0" stroke-width="2.0" opacity="0.2"/><path d="M224.4 960.5h0M490.2 928.2h0M522.5 964.0h0M235.1 914.5h0M244.4 830.3h0M385.2 902.6h0M610.9 952.0h0M263.9 910.5h0M320.6 849.5h0M353.9 924.5h0M286.8 853.5h0M601.2 842.4h0M414.9 859.0h0M382.2 913.4h0M321.0 958.3h0M389.7 965.1h0M326.6 916.7h0M277.7 902.8h0M458.1 828.0h0M524.4 918.7h0M416.6 918.8h0M408.4 953.8h0M366.9 856.2h0" stroke-width="2.0" opacity="0.4"/><path d="M375.1 826.2h0M241.9 941.2h0M529.0 853.4h0M251.0 878.2h0M304.2 919.6h0M211.2 892.5h0M254.9 867.9h0M267.6 910.6h0M378.7 868.1h0M369.5 903.7h0M214.5 905.4h0M343.1 951.0h0" stroke-width="2.0" opacity="0.6"/><path d="M673.2 962.3h0M215.9 831.8h0M513.6 901.1h0M608.8 897.0h0M371.6 838.0h0M309.9 903.1h0M495.5 960.1h0M331.1 927.7h0" stroke-width="2.5" opacity="0.2"/><path d="M236.6 887.8h0M241.6 914.2h0M241.0 897.5h0M310.5 873.0h0M215.3 844.2h0M372.9 902.7h0M327.5 883.0h0M277.8 860.0h0M245.9 948.8h0M306.1 851.9h0M284.4 856.5h0M537.6 853.9h0M317.4 949.8h0M292.9 886.7h0" stroke-width="2.5" opacity="0.4"/><path d="M299.0 943.4h0M599.9 826.3h0M295.9 964.0h0M287.0 899.2h0M250.6 857.4h0M329.4 957.5h0M369.8 835.3h0M362.5 838.3h0M344.9 957.4h0" stroke-width="2.5" opacity="0.6"/><path d="M464.9 927.3h0M546.7 860.4h0M338.8 943.5h0M229.1 851.6h0" stroke-width="3.0" opacity="0.4"/><path d="M475.4 946.0h0" stroke-width="3.0" opacity="0.6"/><path d="M263.6 872.1h0M433.8 819.7h0M234.1 885.2h0M206.6 956.1h0" stroke-width="3.5" opacity="0.6"/><path d="M455.2 836.0h0M382.6 894.0h0M428.3 826.9h0" stroke-width="4.0" opacity="0.4"/><path d="M236.8 896.5h0" stroke-width="4.0" opacity="0.6"/></g>
<g fill="none" stroke="#e8f6f8" stroke-linecap="round" filter="url(#blurS)"><path d="M242.5 788.6h0" stroke-width="1.0" opacity="0.4"/><path d="M223.2 962.3h0M214.2 957.8h0" stroke-width="1.0" opacity="0.6"/><path d="M207.7 832.7h0M240.2 957.0h0M222.9 687.7h0M210.1 948.5h0M230.3 768.7h0" stroke-width="1.5" opacity="0.4"/><path d="M216.8 864.8h0M208.7 663.2h0M243.9 736.2h0M220.5 783.5h0M213.8 908.2h0M220.3 932.1h0M213.4 891.8h0M237.4 788.0h0" stroke-width="1.5" opacity="0.6"/><path d="M214.7 965.7h0M224.4 910.7h0M215.6 756.9h0M220.5 928.2h0M234.3 822.8h0M238.6 676.0h0M236.3 802.5h0M240.6 773.5h0M213.2 799.2h0M237.5 954.8h0M235.6 923.3h0" stroke-width="2.0" opacity="0.4"/><path d="M209.3 921.9h0M211.4 643.8h0M235.8 908.7h0M232.8 919.1h0M218.8 952.3h0M222.2 821.4h0M239.1 762.7h0" stroke-width="2.0" opacity="0.6"/><path d="M208.6 934.9h0M244.6 871.2h0M216.5 701.0h0M223.1 826.6h0M211.2 649.3h0" stroke-width="2.5" opacity="0.4"/><path d="M210.6 778.4h0M210.1 920.9h0M235.6 911.4h0M234.5 945.4h0M210.6 716.1h0M224.7 754.4h0" stroke-width="2.5" opacity="0.6"/><path d="M237.1 845.3h0M229.4 719.6h0" stroke-width="3.0" opacity="0.6"/><path d="M227.9 747.7h0" stroke-width="4.0" opacity="0.6"/><path d="M207.4 842.6h0" stroke-width="4.5" opacity="0.6"/><path d="M239.7 887.9h0" stroke-width="5.0" opacity="0.6"/></g>
</g>
<g fill="none" stroke="#bfeedd" stroke-linecap="round" filter="url(#blurL)"><path d="M168.9 534.0h0" stroke-width="1.5" opacity="0.2"/><path d="M198.4 320.6h0" stroke-width="2.0" opacity="0.2"/><path d="M179.7 449.6h0M174.8 462.3h0M198.2 320.8h0M194.0 501.1h0M170.8 900.5h0M203.9 418.0h0M173.3 428.3h0" stroke-width="2.0" opacity="0.4"/><path d="M162.3 405.3h0" stroke-width="2.5" opacity="0.2"/><path d="M195.3 619.3h0" stroke-width="2.5" opacity="0.4"/><path d="M201.6 425.5h0M176.8 860.3h0M195.5 443.0h0M191.4 464.1h0M162.5 637.7h0" stroke-width="3.0" opacity="0.2"/><path d="M160.3 388.1h0M202.9 658.6h0M171.7 679.2h0M162.2 359.1h0M176.3 909.5h0" stroke-width="3.0" opacity="0.4"/><path d="M173.5 443.8h0M165.5 301.5h0" stroke-width="3.5" opacity="0.2"/><path d="M161.1 381.9h0M195.4 501.3h0M180.5 515.5h0M195.2 946.2h0M182.3 608.0h0M183.1 353.6h0" stroke-width="3.5" opacity="0.4"/><path d="M192.8 471.3h0" stroke-width="4.0" opacity="0.2"/><path d="M163.8 510.3h0" stroke-width="4.5" opacity="0.4"/><path d="M183.0 351.9h0M170.9 371.4h0" stroke-width="5.0" opacity="0.4"/><path d="M191.8 752.7h0" stroke-width="6.0" opacity="0.4"/></g>
<g clip-path="url(#artClip)">
<g fill="#0b1a80">
<circle cx="549" cy="168" r="24"/><circle cx="613" cy="184" r="20"/>
<circle cx="791" cy="150" r="71.5"/><circle cx="860" cy="160" r="55"/><circle cx="915" cy="155" r="43"/>
</g>
<circle cx="505" cy="170" r="15" fill="none" stroke="#cccdfa" stroke-width="6"/>
<circle cx="970" cy="173" r="20" fill="#0c1374" stroke="#cccdfa" stroke-width="7"/>
<g filter="url(#blur2)"><path d="M621 176 L731 176 L764 236 L621 236 Z" fill="#5cc2ca" opacity="0.78"/><path d="M666 176 L703 176 L714 236 L662 236 Z" fill="#8eeae4" opacity="0.8"/><path d="M700 200 L738 186 L742 196 L704 212 Z" fill="#9cf2ee" opacity="0.45"/><path d="M624 176 L650 176 L640 204 L624 200 Z" fill="#3f86b8" opacity="0.5"/></g>
<path d="M706.0 214.0l3 -9M709.2 213.4l3 -9M712.4 212.8l3 -9M715.6 212.2l3 -9M718.8 211.6l3 -9M722.0 211.0l3 -9M725.2 210.4l3 -9M728.4 209.8l3 -9M731.6 209.2l3 -9M734.8 208.6l3 -9M738.0 208.0l3 -9M741.2 207.4l3 -9M744.4 206.8l3 -9M747.6 206.2l3 -9M642.0 188.0l2.5 7M644.6 190.2l2.5 7M647.2 192.4l2.5 7M649.8 194.6l2.5 7M652.4 196.8l2.5 7M655.0 199.0l2.5 7M657.6 201.2l2.5 7M660.2 203.4l2.5 7M662.8 205.6l2.5 7M665.4 207.8l2.5 7" stroke="#2f6fae" stroke-width="0.9" fill="none" opacity="0.55"/>
<g fill="none" stroke="#c2c0f7" stroke-width="5.2" stroke-linecap="butt">
<path d="M568 180 L576 232"/><path d="M615.5 180 L619.5 232"/><path d="M763 180 L771 232"/><path d="M840 180 L847 232"/><path d="M886 180 L893 232"/><path d="M933 180 L942 232"/>
</g>
<path d="M686 822 C682 840 677 855 672 868" stroke="#9db0ea" stroke-width="2.2" fill="none" opacity="0.6" filter="url(#blur1)"/>
<g>
<path d="M960 450 C980 444 995 443 1001 446 C1003 452 998 460 990 466 C984 474 976 482 960 490 Z" fill="#86ece6" opacity="0.7"/>
<path d="M960 498 C990 502 1020 512 1040 528 C1052 536 1062 540 1074 538 C1090 540 1096 552 1090 562 C1080 570 1068 568 1058 566 C1050 574 1046 578 1040 575 C1030 570 1020 560 1010 552 C995 540 975 530 960 527 Z" fill="#8af0ea" opacity="0.85"/>
<path d="M960 566 C985 562 1010 552 1040 540 L1054 558 C1030 568 1000 577 960 582 Z" fill="#86ece6" opacity="0.8"/>
<path d="M1056 553 C1080 535 1110 516 1130 508 C1160 496 1190 489 1200 500 C1204 514 1192 535 1176 552 C1166 564 1150 576 1125 580 C1100 580 1075 568 1056 553 Z" fill="#7fe6e2" opacity="0.42"/>
<g fill="#9af6f0" fill-opacity="0.085" stroke="#9af6f0" stroke-opacity="0.70" stroke-width="0.6"><path d="M1056.0 553.0Q1087.4 547.9 1100.0 524.0Q1073.0 526.2 1056.0 553.0Z"/><path d="M1056.0 553.0Q1090.1 546.5 1105.1 521.3Q1076.0 524.6 1056.0 553.0Z"/><path d="M1056.0 553.0Q1092.8 545.0 1110.2 518.5Q1078.9 523.1 1056.0 553.0Z"/><path d="M1056.0 553.0Q1095.5 543.6 1115.4 515.8Q1081.7 521.5 1056.0 553.0Z"/><path d="M1056.0 553.0Q1098.3 542.1 1120.5 513.1Q1084.6 520.0 1056.0 553.0Z"/><path d="M1056.0 553.0Q1101.1 540.6 1125.6 510.3Q1087.5 518.5 1056.0 553.0Z"/><path d="M1056.0 553.0Q1103.9 539.2 1130.8 507.7Q1090.4 517.0 1056.0 553.0Z"/><path d="M1056.0 553.0Q1106.7 538.2 1136.2 505.7Q1093.5 515.8 1056.0 553.0Z"/><path d="M1056.0 553.0Q1109.6 537.2 1141.7 503.7Q1096.6 514.6 1056.0 553.0Z"/><path d="M1056.0 553.0Q1112.5 536.1 1147.1 501.7Q1099.7 513.5 1056.0 553.0Z"/><path d="M1056.0 553.0Q1115.4 535.1 1152.6 499.7Q1102.8 512.3 1056.0 553.0Z"/><path d="M1056.0 553.0Q1118.3 534.0 1158.0 497.7Q1105.9 511.2 1056.0 553.0Z"/><path d="M1056.0 553.0Q1121.2 533.3 1163.6 496.3Q1109.1 510.3 1056.0 553.0Z"/><path d="M1056.0 553.0Q1124.2 532.8 1169.3 495.1Q1112.4 509.6 1056.0 553.0Z"/><path d="M1056.0 553.0Q1127.2 532.2 1175.0 494.0Q1115.7 508.9 1056.0 553.0Z"/><path d="M1056.0 553.0Q1130.2 531.6 1180.7 492.9Q1118.9 508.2 1056.0 553.0Z"/><path d="M1056.0 553.0Q1133.2 531.1 1186.4 491.7Q1122.2 507.5 1056.0 553.0Z"/><path d="M1056.0 553.0Q1135.9 531.5 1191.6 492.3Q1125.3 507.8 1056.0 553.0Z"/><path d="M1056.0 553.0Q1138.0 533.7 1196.1 496.0Q1128.2 509.6 1056.0 553.0Z"/><path d="M1056.0 553.0Q1140.0 535.9 1200.6 499.7Q1131.0 511.5 1056.0 553.0Z"/><path d="M1056.0 553.0Q1139.6 539.1 1200.6 505.3Q1131.5 514.4 1056.0 553.0Z"/><path d="M1056.0 553.0Q1138.9 542.4 1200.2 511.1Q1131.7 517.4 1056.0 553.0Z"/><path d="M1056.0 553.0Q1137.7 545.6 1198.8 516.6Q1131.3 520.4 1056.0 553.0Z"/><path d="M1056.0 553.0Q1136.0 548.5 1196.3 521.8Q1130.3 523.2 1056.0 553.0Z"/><path d="M1056.0 553.0Q1134.2 551.5 1193.8 527.0Q1129.4 526.0 1056.0 553.0Z"/><path d="M1056.0 553.0Q1132.4 554.5 1191.3 532.3Q1128.4 528.8 1056.0 553.0Z"/><path d="M1056.0 553.0Q1130.3 557.2 1188.2 537.2Q1127.2 531.4 1056.0 553.0Z"/><path d="M1056.0 553.0Q1127.8 559.7 1184.5 541.6Q1125.5 533.8 1056.0 553.0Z"/><path d="M1056.0 553.0Q1125.4 562.2 1180.8 546.1Q1123.9 536.2 1056.0 553.0Z"/><path d="M1056.0 553.0Q1122.9 564.7 1177.2 550.6Q1122.4 538.7 1056.0 553.0Z"/><path d="M1056.0 553.0Q1120.4 567.1 1173.5 555.1Q1120.8 541.1 1056.0 553.0Z"/><path d="M1056.0 553.0Q1117.8 569.6 1169.7 559.5Q1119.3 543.6 1056.0 553.0Z"/><path d="M1056.0 553.0Q1115.2 572.0 1166.0 564.0Q1117.8 546.1 1056.0 553.0Z"/><path d="M1056.0 553.0Q1112.1 573.7 1161.2 567.3Q1115.6 548.0 1056.0 553.0Z"/><path d="M1056.0 553.0Q1109.0 575.5 1156.5 570.6Q1113.5 549.8 1056.0 553.0Z"/><path d="M1056.0 553.0Q1105.9 577.2 1151.7 573.8Q1111.4 551.8 1056.0 553.0Z"/><path d="M1056.0 553.0Q1102.5 578.2 1146.3 575.9Q1108.9 553.0 1056.0 553.0Z"/><path d="M1056.0 553.0Q1099.0 578.8 1140.7 577.2Q1106.2 553.8 1056.0 553.0Z"/><path d="M1056.0 553.0Q1095.5 579.4 1135.1 578.6Q1103.5 554.7 1056.0 553.0Z"/><path d="M1056.0 553.0Q1091.9 580.0 1129.4 579.9Q1100.9 555.6 1056.0 553.0Z"/><path d="M1056.0 553.0Q1088.3 580.3 1123.8 580.8Q1098.2 556.3 1056.0 553.0Z"/><path d="M1056.0 553.0Q1084.9 579.8 1118.0 580.1Q1095.3 556.0 1056.0 553.0Z"/><path d="M1056.0 553.0Q1081.4 579.2 1112.3 579.3Q1092.4 555.7 1056.0 553.0Z"/><path d="M1056.0 553.0Q1077.9 578.6 1106.5 578.5Q1089.6 555.4 1056.0 553.0Z"/><path d="M1056.0 553.0Q1074.3 578.0 1100.8 577.8Q1086.9 555.2 1056.0 553.0Z"/><path d="M1056.0 553.0Q1070.6 577.3 1095.0 577.0Q1084.3 555.1 1056.0 553.0Z"/></g>
<path d="M1056 548 C1090 548 1130 536 1170 512 C1150 540 1110 560 1062 562 Z" fill="#b4fff8" opacity="0.45"/>
<path d="M960 676 C985 690 1000 702 1012 709 C1020 716 1020 740 1008 756 C995 754 975 748 960 742 Z" fill="#86ece6" opacity="0.7"/>
<path d="M990 728 C1000 712 1022 704 1040 710 C1060 720 1078 734 1083 748 C1076 758 1055 763 1030 763 C1010 760 996 748 990 728 Z" fill="#7fe6e2" opacity="0.42"/>
<g fill="#9af6f0" fill-opacity="0.085" stroke="#9af6f0" stroke-opacity="0.70" stroke-width="0.6"><path d="M990.0 728.0Q1013.3 724.1 1022.0 706.0Q1001.9 707.7 990.0 728.0Z"/><path d="M990.0 728.0Q1015.4 725.3 1027.3 707.2Q1005.6 707.8 990.0 728.0Z"/><path d="M990.0 728.0Q1017.6 726.3 1032.6 708.4Q1009.2 708.1 990.0 728.0Z"/><path d="M990.0 728.0Q1019.9 727.2 1037.9 709.5Q1012.8 708.5 990.0 728.0Z"/><path d="M990.0 728.0Q1022.0 728.5 1042.9 711.6Q1016.1 709.4 990.0 728.0Z"/><path d="M990.0 728.0Q1024.0 730.1 1047.6 714.2Q1019.4 710.7 990.0 728.0Z"/><path d="M990.0 728.0Q1026.1 731.7 1052.4 716.8Q1022.6 712.0 990.0 728.0Z"/><path d="M990.0 728.0Q1028.2 733.2 1057.2 719.4Q1025.7 713.4 990.0 728.0Z"/><path d="M990.0 728.0Q1030.2 734.9 1061.7 722.4Q1028.6 714.9 990.0 728.0Z"/><path d="M990.0 728.0Q1032.0 736.8 1065.9 725.8Q1031.5 716.8 990.0 728.0Z"/><path d="M990.0 728.0Q1033.9 738.7 1070.1 729.2Q1034.2 718.7 990.0 728.0Z"/><path d="M990.0 728.0Q1035.8 740.5 1074.3 732.6Q1036.9 720.6 990.0 728.0Z"/><path d="M990.0 728.0Q1037.1 742.9 1077.5 736.9Q1039.1 723.0 990.0 728.0Z"/><path d="M990.0 728.0Q1037.9 745.5 1079.9 741.8Q1041.0 725.7 990.0 728.0Z"/><path d="M990.0 728.0Q1038.8 748.1 1082.3 746.7Q1042.8 728.5 990.0 728.0Z"/><path d="M990.0 728.0Q1037.2 750.2 1080.2 750.8Q1042.1 730.8 990.0 728.0Z"/><path d="M990.0 728.0Q1034.6 752.2 1076.4 754.6Q1040.5 733.1 990.0 728.0Z"/><path d="M990.0 728.0Q1031.7 753.6 1072.0 757.5Q1038.5 734.8 990.0 728.0Z"/><path d="M990.0 728.0Q1028.5 754.3 1066.8 758.9Q1036.0 735.7 990.0 728.0Z"/><path d="M990.0 728.0Q1025.2 754.9 1061.5 760.3Q1033.4 736.6 990.0 728.0Z"/><path d="M990.0 728.0Q1021.9 755.4 1056.3 761.7Q1031.0 737.6 990.0 728.0Z"/><path d="M990.0 728.0Q1018.6 755.5 1050.9 762.2Q1028.4 738.1 990.0 728.0Z"/><path d="M990.0 728.0Q1015.2 755.4 1045.4 762.4Q1025.8 738.4 990.0 728.0Z"/><path d="M990.0 728.0Q1011.8 755.3 1040.0 762.6Q1023.2 738.8 990.0 728.0Z"/><path d="M990.0 728.0Q1008.4 755.0 1034.6 762.8Q1020.7 739.3 990.0 728.0Z"/><path d="M990.0 728.0Q1004.9 754.6 1029.2 762.8Q1018.2 739.7 990.0 728.0Z"/><path d="M990.0 728.0Q1001.6 753.6 1023.9 761.6Q1015.7 739.4 990.0 728.0Z"/><path d="M990.0 728.0Q998.2 752.4 1018.6 760.4Q1013.2 739.2 990.0 728.0Z"/><path d="M990.0 728.0Q994.8 751.1 1013.3 759.2Q1010.8 739.2 990.0 728.0Z"/><path d="M990.0 728.0Q991.3 749.6 1008.0 758.0Q1008.5 739.4 990.0 728.0Z"/></g>
<path d="M985 700 C1005 715 1020 735 1040 752 C1015 750 995 735 985 700 Z" fill="#b0fff8" opacity="0.35"/>
</g>
<g fill="none" stroke-width="5.4" stroke-linecap="round" opacity="0.9">
<path d="M960 305 C985 350 1012 400 1030 442 C1050 480 1070 510 1082.700 535 C1100 572 1110 600 1114 620 C1124 655 1130 700 1131 741 C1131 770 1128 795 1125 815" stroke="url(#fade1)"/>
<path d="M960 410 C980 445 995 468 1002 480 C1015 500 1040 545 1053 575.600 C1062 596 1068 612 1070 620 C1082 655 1091 700 1096 735 C1099 765 1097 800 1092 834" stroke="url(#fade2)"/>
<path d="M960 505 C975 515 985 525 991.700 535 C1000 550 1004 570 1005.500 582 C1008 600 1010 612 1010 620 C1011 660 1012 700 1013 740 C1014 775 1012 810 1008 847" stroke="url(#fade3)"/>
<path d="M960 560 C972 578 985 600 989.600 620 C996 640 1004 660 1007 674 C1010 700 1008 730 1003 749 C1000 765 995 780 991 796" stroke="url(#fade4)"/>
</g>
<path d="M1106 168 C1102 220 1078 270 1055 302" stroke="#cfe4e6" stroke-width="62" stroke-linecap="round" fill="none" filter="url(#spkS)" opacity="0.8"/>
<path d="M1106 168 C1102 220 1078 270 1055 302" stroke="#dbe6e7" stroke-width="44" stroke-linecap="round" fill="none" filter="url(#spkM)" opacity="0.95"/>
<path d="M1106 168 C1102 220 1078 270 1055 302" stroke="#e6eded" stroke-width="32" stroke-linecap="round" fill="none" filter="url(#spkC)"/>
<path d="M407 168 C409 200 411 230 415 262" stroke="#c9eceb" stroke-width="64" stroke-linecap="round" fill="none" filter="url(#spkS)" opacity="0.7"/>
<path d="M407 168 C409 200 411 230 415 262" stroke="#d6efee" stroke-width="44" stroke-linecap="round" fill="none" filter="url(#spkM)" opacity="0.8"/>
<path d="M407 168 C409 200 411 230 415 262" stroke="#e9f6f5" stroke-width="24" stroke-linecap="round" fill="none" filter="url(#spkC)" opacity="0.95"/>
</g>
</svg>
</div>

<!-- vertical scrollbar -->
<div class="a" style="left:1410px;top:184px;width:2px;height:802px;background:#fff"></div>
<div class="a" style="left:1391px;top:184px;width:19px;height:784px;background:#fff"></div>
<div class="a" style="left:1391px;top:184px;width:19px;height:21px;background:#f0f0f0"></div>
<svg style="left:1395px;top:191px" width="10" height="7" viewBox="0 0 10 7"><path d="M1 6 L5 1.6 L9 6" fill="none" stroke="#333" stroke-width="1.8"/></svg>
<div class="a" style="left:1391px;top:500px;width:18px;height:149.5px;background:#cdcdcd"></div>
<div class="a" style="left:1391px;top:947px;width:19px;height:21px;background:#f0f0f0"></div>
<svg style="left:1395px;top:954px" width="10" height="7" viewBox="0 0 10 7"><path d="M1 1 L5 5.4 L9 1" fill="none" stroke="#333" stroke-width="1.8"/></svg>
<!-- horizontal scrollbar -->
<div class="a" style="left:53px;top:968px;width:1338px;height:18px;background:#fff"></div>
<div class="a" style="left:53px;top:968px;width:21px;height:18px;background:#f0f0f0"></div>
<svg style="left:60px;top:972px" width="7" height="10" viewBox="0 0 7 10"><path d="M6 1 L1.6 5 L6 9" fill="none" stroke="#333" stroke-width="1.8"/></svg>
<div class="a" style="left:384px;top:968px;width:648px;height:17px;background:#cdcdcd"></div>
<div class="a" style="left:1369px;top:968px;width:41px;height:18px;background:#f0f0f0"></div>
<svg style="left:1377px;top:972px" width="7" height="10" viewBox="0 0 7 10"><path d="M1 1 L5.4 5 L1 9" fill="none" stroke="#333" stroke-width="1.8"/></svg>
<svg style="left:1392px;top:969px" width="16" height="16" viewBox="0 0 16 16"><circle cx="6.6" cy="6.6" r="5.6" fill="#fff" stroke="#333" stroke-width="1.2"/><path d="M10.8 10.8 L15 15" stroke="#333" stroke-width="1.8"/><path d="M6.6 3 V5 M6.6 8.2 V10.2 M3 6.6 H5 M8.2 6.6 H10.2" stroke="#333" stroke-width="1.4"/></svg>
<div class="a" style="left:36px;top:986px;width:1374px;height:2px;background:#e6e6e6"></div>

<div class="a" id="pagenav" style="left:36px;top:988px;width:1374px;height:27px;background:#f3f3f3">
<svg style="left:7px;top:6px" width="13" height="13" viewBox="0 0 13 13"><path d="M6.5 0 V13 M0 6.5 H13" stroke="#2b2b2b" stroke-width="1.5"/></svg>
<svg style="left:35px;top:7px" width="12" height="11" viewBox="0 0 12 11"><path d="M1 0 V11" stroke="#b0b0b0" stroke-width="1.6"/><path d="M11.5 0 V11 L3.5 5.5 Z" fill="#b0b0b0"/></svg>
<svg style="left:63px;top:7px" width="10" height="11" viewBox="0 0 10 11"><path d="M9.5 0 V11 L1 5.5 Z" fill="#b0b0b0"/></svg>
<span class="t" style="left:89px;top:7px;font-size:12.4px;color:#9a9a9a;word-spacing:5.5px">1 of 1</span>
<svg style="left:147px;top:7px" width="10" height="11" viewBox="0 0 10 11"><path d="M0.5 0 V11 L9 5.5 Z" fill="#b0b0b0"/></svg>
<svg style="left:173px;top:7px" width="12" height="11" viewBox="0 0 12 11"><path d="M11 0 V11" stroke="#b0b0b0" stroke-width="1.6"/><path d="M0.5 0 V11 L8.5 5.5 Z" fill="#b0b0b0"/></svg>
<svg style="left:200px;top:6px" width="13" height="13" viewBox="0 0 13 13"><path d="M6.5 0 V13 M0 6.5 H13" stroke="#2b2b2b" stroke-width="1.5"/></svg>
<div class="a" style="left:220px;top:0;width:125px;height:27px;background:#d9d9d9"></div>
<span class="t" style="left:262px;top:8px;font-size:12.4px">Page 1</span>
</div>
<div class="a" style="left:36px;top:1015px;width:1374px;height:1px;background:#d4d4d4"></div>
<div class="a" id="colorbar" style="left:36px;top:1016px;width:1374px;height:24px;background:#f3f3f3">
<svg style="left:2px;top:3px" width="6" height="18" viewBox="0 0 6 18"><g fill="#c8c8c8"><rect x="0" y="0" width="1" height="1"/><rect x="2" y="2" width="1" height="1"/><rect x="4" y="0" width="1" height="1"/><rect x="0" y="4" width="1" height="1"/><rect x="2" y="6" width="1" height="1"/><rect x="4" y="4" width="1" height="1"/><rect x="0" y="8" width="1" height="1"/><rect x="2" y="10" width="1" height="1"/><rect x="4" y="8" width="1" height="1"/><rect x="0" y="12" width="1" height="1"/><rect x="2" y="14" width="1" height="1"/><rect x="4" y="12" width="1" height="1"/><rect x="0" y="16" width="1" height="1"/><rect x="4" y="16" width="1" height="1"/></g></svg>
<svg style="left:16px;top:7px" width="6" height="10" viewBox="0 0 6 10"><path d="M0.5 0 V10 L6 5 Z" fill="#444"/></svg>
<svg style="left:34px;top:2px" width="19" height="19" viewBox="0 0 21 21"><path d="M12.4 6 L15 8.6 L5 18.6 L2 19.4 L2.6 16 Z" fill="#f3f3f3" stroke="#2b2b2b" stroke-width="1.3"/><path d="M2 19.4 L2.6 16 L6.4 12.2 L9 14.8 L5 18.6 Z" fill="#e8731a"/><path d="M11.6 3.2 L17.8 9.4 L16.2 11 L10 4.8 Z" fill="#2b2b2b"/><path d="M14.4 3.6 C15.6 1 18.2 0.6 19.6 2 C21 3.4 20.4 5.6 17.6 6.8 Z" fill="#2b2b2b"/></svg>
<svg style="left:61px;top:6px" width="9" height="13" viewBox="0 0 9 13"><path d="M8 1 L1.6 6.5 L8 12" fill="none" stroke="#c6c6c6" stroke-width="1.6"/></svg>
<div class="a" style="left:76px;top:1px;width:65px;height:22px;border:1px solid #333;background:#fff"></div>
<div class="a" style="left:97px;top:2px;width:1px;height:20px;background:#333"></div>
<div class="a" style="left:118px;top:2px;width:22px;height:20px;background:#9df6f9;border-left:1px solid #333"></div>
<svg style="left:79px;top:4px" width="16" height="16" viewBox="0 0 16 16"><path d="M1 15 L15 1" stroke="#e84040" stroke-width="1.1"/></svg>
<svg style="left:1329px;top:5px" width="10" height="14" viewBox="0 0 10 14"><path d="M1.5 1 L8 7 L1.5 13" fill="none" stroke="#c6c6c6" stroke-width="1.6"/></svg>
<svg style="left:1350px;top:7px" width="13" height="10" viewBox="0 0 13 10"><path d="M1 1 L5 5 L1 9 M7 1 L11 5 L7 9" fill="none" stroke="#c0c0c0" stroke-width="1.4"/></svg>
</div>

<div class="a" style="left:1410px;top:140px;width:3px;height:44px;background:#f0f0f0"></div>
<div class="a" style="left:1412px;top:140px;width:1px;height:900px;background:#cfcfcf"></div>
<div class="a" id="docker" style="left:1413px;top:140px;width:456px;height:900px;background:#fff;font-size:12.4px">
<div class="a" style="left:0;top:0;width:483px;height:28px;background:#e9e9e9"></div>
<span class="t" style="left:8px;top:9px">Objects</span>
<svg style="left:437px;top:8px" width="14" height="12" viewBox="0 0 14 12"><path d="M0.5 0.5 V11.5 L6.5 6 Z M7.5 0.5 V11.5 L13.5 6 Z" fill="#b4b4b4"/></svg>
<svg style="left:462px;top:8px" width="12" height="12" viewBox="0 0 12 12"><path d="M1 1 L11 11 M11 1 L1 11" stroke="#b4b4b4" stroke-width="1.6"/></svg>
<div class="a" style="left:0;top:28px;width:456px;height:73px;background:#f3f3f3"></div>
<div class="a" style="left:0;top:28px;width:456px;height:1px;background:#d0d0d0"></div>
<div class="a" style="left:4px;top:35px;width:451px;height:28px;background:#fff;border:1px solid #b9b9b9"></div>
<span class="t" style="left:8px;top:44px;color:#6a6a6a">Search</span>
<div class="a" style="left:4px;top:68px;width:27px;height:28px;background:#fafafa;border:1px solid #b4b4b4"></div>
<svg style="left:8px;top:72px" width="20" height="20" viewBox="0 0 20 20"><path d="M5 1 H13 V7 M5 1 L1 5 V18.6 H7" fill="none" stroke="#2b2b2b" stroke-width="1.3"/><path d="M1 5 H5 V1" fill="none" stroke="#2b2b2b" stroke-width="1"/><path d="M12.6 8.4 L18.4 11.4 L12.6 14.4 L6.8 11.4 Z" fill="#fafafa" stroke="#2b2b2b" stroke-width="1.2"/><path d="M6.8 14.6 L12.6 17.6 L18.4 14.6 L12.6 19.6 Z" fill="#2b2b2b" stroke="#2b2b2b" stroke-width="1"/></svg>
<svg style="left:40px;top:73px" width="20" height="17" viewBox="0 0 20 17"><path d="M10 1 L19 5.8 L10 10.6 L1 5.8 Z" fill="#fafafa" stroke="#2b2b2b" stroke-width="1.4" stroke-linejoin="round"/><path d="M1 10.6 L4.4 8.8 L10 12 L15.6 8.8 L19 10.6 L10 15.6 Z" fill="#2b2b2b" stroke="#2b2b2b" stroke-width="1" stroke-linejoin="round"/></svg>
<span class="t" style="left:69px;top:77px;font-weight:bold">Page 1</span>
<span class="t" style="left:130px;top:77px">Layer 1</span>
<svg style="left:430px;top:71px" width="24" height="24" viewBox="0 0 24 24"><g transform="translate(11,11)"><circle r="6.2" fill="none" stroke="#2b2b2b" stroke-width="3.2"/><g fill="#2b2b2b"><rect x="-1.9" y="-9.8" width="3.8" height="3.8"/><rect x="-1.9" y="6" width="3.8" height="3.8"/><rect x="-9.8" y="-1.9" width="3.8" height="3.8"/><rect x="6" y="-1.9" width="3.8" height="3.8"/><g transform="rotate(45)"><rect x="-1.9" y="-9.8" width="3.8" height="3.8"/><rect x="-1.9" y="6" width="3.8" height="3.8"/><rect x="-9.8" y="-1.9" width="3.8" height="3.8"/><rect x="6" y="-1.9" width="3.8" height="3.8"/></g></g></g><path d="M22.6 18.6 V22.6 H18.6 Z" fill="#777"/></svg>
<div class="a" style="left:2px;top:100px;width:453px;height:32px;background:#f3f3f3;border-top:1px solid #dcdcdc"></div>
<svg style="left:12px;top:112px" width="10" height="8" viewBox="0 0 10 8"><path d="M0 0 H10 L5 8 Z" fill="#2b2b2b"/></svg>
<span class="t" style="left:30px;top:111px;font-weight:bold">Page 1</span>
<div class="a" style="left:2px;top:132px;width:453px;height:32px;background:#fff;border-top:1px solid #dcdcdc"></div>
<span class="t" style="left:54px;top:143px">Guides</span>
<svg style="left:30px;top:139px" width="18" height="18" viewBox="0 0 18 18"><path d="M5.5 0.5 V17" stroke="#2b2b2b" stroke-width="1" stroke-dasharray="2 1"/><path d="M0.5 5.5 H17" stroke="#2b2b2b" stroke-width="1" stroke-dasharray="2 1"/><circle cx="5.5" cy="5.5" r="1.6" fill="#fff" stroke="#2b2b2b" stroke-width="0.9"/></svg>
<div class="a" style="left:444px;top:137px;width:6px;height:23px;border-radius:3px;background:#0a0aff"></div>
<svg style="left:419px;top:140px" width="16" height="16" viewBox="0 0 16 16"><path d="M4.4 8 V2.6 L6.4 0.8 H11 V8" fill="#fff" stroke="#2b2b2b" stroke-width="1.1"/><path d="M0.8 8 H15.2 V15 H0.8 Z" fill="#fff" stroke="#2b2b2b" stroke-width="1.2"/><path d="M3.4 8.2 H12.6 V11 H3.4 Z" fill="#fff" stroke="#2b2b2b" stroke-width="1"/><path d="M1.2 1 L15 14.8" stroke="#2b2b2b" stroke-width="1"/></svg>
<div class="a" style="left:2px;top:164px;width:453px;height:32px;background:#fff;border-top:1px solid #dcdcdc"></div>
<span class="t" style="left:54px;top:175px">Layer 2</span>
<svg style="left:13px;top:175px" width="7" height="11" viewBox="0 0 7 11"><path d="M0.3 0 V11 L7 5.5 Z" fill="#2b2b2b"/></svg>
<svg style="left:31px;top:173px" width="17" height="15" viewBox="0 0 20 17"><path d="M10 1 L19 5.8 L10 10.6 L1 5.8 Z" fill="#fafafa" stroke="#2b2b2b" stroke-width="1.4" stroke-linejoin="round"/><path d="M1 10.6 L4.4 8.8 L10 12 L15.6 8.8 L19 10.6 L10 15.6 Z" fill="#2b2b2b" stroke="#2b2b2b" stroke-width="1" stroke-linejoin="round"/></svg>
<div class="a" style="left:444px;top:169px;width:6px;height:23px;border-radius:3px;background:#1e1e1e"></div>
<svg style="left:402px;top:172px" width="14" height="16" viewBox="0 0 14 16"><path d="M3.4 7 V4.4 A3.4 3.4 0 0 1 10.2 4.4 V7" fill="none" stroke="#2b2b2b" stroke-width="1.5"/><rect x="0.6" y="6.6" width="12.4" height="8.8" fill="#2b2b2b"/></svg>
<div class="a" style="left:2px;top:196px;width:453px;height:32px;background:#fff;border-top:1px solid #dcdcdc"></div>
<span class="t" style="left:54px;top:207px;font-weight:bold">Layer 1</span>
<svg style="left:13px;top:207px" width="7" height="11" viewBox="0 0 7 11"><path d="M0.3 0 V11 L7 5.5 Z" fill="#2b2b2b"/></svg>
<svg style="left:31px;top:205px" width="17" height="15" viewBox="0 0 20 17"><path d="M10 1 L19 5.8 L10 10.6 L1 5.8 Z" fill="#fafafa" stroke="#2b2b2b" stroke-width="1.4" stroke-linejoin="round"/><path d="M1 10.6 L4.4 8.8 L10 12 L15.6 8.8 L19 10.6 L10 15.6 Z" fill="#2b2b2b" stroke="#2b2b2b" stroke-width="1" stroke-linejoin="round"/></svg>
<div class="a" style="left:444px;top:201px;width:6px;height:23px;border-radius:3px;background:#1e1e1e"></div>
<div class="a" style="left:2px;top:228px;width:453px;height:32px;background:#fff;border-top:1px solid #dcdcdc"></div>
<span class="t" style="left:54px;top:239px">Layer 3</span>
<svg style="left:13px;top:239px" width="7" height="11" viewBox="0 0 7 11"><path d="M0.3 0 V11 L7 5.5 Z" fill="#2b2b2b"/></svg>
<svg style="left:31px;top:237px" width="17" height="15" viewBox="0 0 20 17"><path d="M10 1 L19 5.8 L10 10.6 L1 5.8 Z" fill="#fafafa" stroke="#2b2b2b" stroke-width="1.4" stroke-linejoin="round"/><path d="M1 10.6 L4.4 8.8 L10 12 L15.6 8.8 L19 10.6 L10 15.6 Z" fill="#2b2b2b" stroke="#2b2b2b" stroke-width="1" stroke-linejoin="round"/></svg>
<div class="a" style="left:444px;top:233px;width:6px;height:23px;border-radius:3px;background:#1e1e1e"></div>
<div class="a" style="left:2px;top:260px;width:453px;height:32px;background:#f3f3f3;border-top:1px solid #dcdcdc"></div>
<svg style="left:12px;top:272px" width="10" height="8" viewBox="0 0 10 8"><path d="M0 0 H10 L5 8 Z" fill="#2b2b2b"/></svg>
<span class="t" style="left:30px;top:271px">Master Page</span>
<div class="a" style="left:2px;top:292px;width:453px;height:32px;background:#fff;border-top:1px solid #dcdcdc"></div>
<span class="t" style="left:54px;top:303px">Guides (all pages)</span>
<svg style="left:30px;top:299px" width="18" height="18" viewBox="0 0 18 18"><path d="M5.5 0.5 V17" stroke="#2b2b2b" stroke-width="1" stroke-dasharray="2 1"/><path d="M0.5 5.5 H17" stroke="#2b2b2b" stroke-width="1" stroke-dasharray="2 1"/><circle cx="5.5" cy="5.5" r="1.6" fill="#fff" stroke="#2b2b2b" stroke-width="0.9"/></svg>
<div class="a" style="left:444px;top:297px;width:6px;height:23px;border-radius:3px;background:#0a0aff"></div>
<svg style="left:419px;top:300px" width="16" height="16" viewBox="0 0 16 16"><path d="M4.4 8 V2.6 L6.4 0.8 H11 V8" fill="#fff" stroke="#2b2b2b" stroke-width="1.1"/><path d="M0.8 8 H15.2 V15 H0.8 Z" fill="#fff" stroke="#2b2b2b" stroke-width="1.2"/><path d="M3.4 8.2 H12.6 V11 H3.4 Z" fill="#fff" stroke="#2b2b2b" stroke-width="1"/><path d="M1.2 1 L15 14.8" stroke="#2b2b2b" stroke-width="1"/></svg>
<div class="a" style="left:2px;top:324px;width:453px;height:32px;background:#fff;border-top:1px solid #dcdcdc"></div>
<span class="t" style="left:54px;top:335px">Desktop</span>
<svg style="left:30px;top:331px" width="18" height="18" viewBox="0 0 18 18"><rect x="4" y="4.4" width="10" height="9.6" fill="#2b2b2b"/><rect x="2" y="2.4" width="14" height="13.6" fill="none" stroke="#2b2b2b" stroke-width="1"/><path d="M0.5 2.4 H2 M2 0.8 V2.4 M16 0.8 V2.4 M16 2.4 H17.5 M0.5 16 H2 M2 16 V17.6 M16 16 V17.6 M16 16 H17.5" stroke="#2b2b2b" stroke-width="1"/></svg>
<div class="a" style="left:444px;top:329px;width:6px;height:23px;border-radius:3px;background:#1e1e1e"></div>
<svg style="left:419px;top:332px" width="16" height="16" viewBox="0 0 16 16"><path d="M4.4 8 V2.6 L6.4 0.8 H11 V8" fill="#fff" stroke="#2b2b2b" stroke-width="1.1"/><path d="M0.8 8 H15.2 V15 H0.8 Z" fill="#fff" stroke="#2b2b2b" stroke-width="1.2"/><path d="M3.4 8.2 H12.6 V11 H3.4 Z" fill="#fff" stroke="#2b2b2b" stroke-width="1"/><path d="M1.2 1 L15 14.8" stroke="#2b2b2b" stroke-width="1"/></svg>
<div class="a" style="left:2px;top:356px;width:453px;height:32px;background:#fff;border-top:1px solid #dcdcdc"></div>
<span class="t" style="left:54px;top:367px">Document Grid</span>
<svg style="left:30px;top:363px" width="18" height="18" viewBox="0 0 18 18"><path d="M5.5 0.5 V17.5 M12.5 0.5 V17.5 M0.5 5.5 H17.5 M0.5 12.5 H17.5" stroke="#2b2b2b" stroke-width="1.2"/></svg>
<div class="a" style="left:444px;top:361px;width:6px;height:23px;border-radius:3px;background:#c4c4c4"></div>
<svg style="left:419px;top:364px" width="16" height="16" viewBox="0 0 16 16"><path d="M4.4 8 V2.6 L6.4 0.8 H11 V8" fill="#fff" stroke="#c9c9c9" stroke-width="1.1"/><path d="M0.8 8 H15.2 V15 H0.8 Z" fill="#fff" stroke="#c9c9c9" stroke-width="1.2"/><path d="M3.4 8.2 H12.6 V11 H3.4 Z" fill="#fff" stroke="#c9c9c9" stroke-width="1"/><path d="M1.2 1 L15 14.8" stroke="#c9c9c9" stroke-width="1"/></svg>
<svg style="left:402px;top:364px" width="14" height="16" viewBox="0 0 14 16"><path d="M3.4 7 V4.4 A3.4 3.4 0 0 1 10.2 4.4 V7" fill="none" stroke="#c4c4c4" stroke-width="1.5"/><rect x="0.6" y="6.6" width="12.4" height="8.8" fill="#c4c4c4"/></svg>
<svg style="left:381px;top:365px" width="18" height="14" viewBox="0 0 18 14"><path d="M1 7 C4 2 14 2 17 7 C14 12 4 12 1 7 Z" fill="#fff" stroke="#555" stroke-width="1.2"/><circle cx="9" cy="7" r="2.6" fill="#555"/><path d="M3 1 L15.6 13.4" stroke="#555" stroke-width="1.2"/></svg>
<div class="a" style="left:2px;top:388px;width:453px;height:1px;background:#fff"></div>
<div class="a" style="left:2px;top:871px;width:454px;height:29px;background:#f3f3f3"></div>
<svg style="left:7px;top:875px" width="22" height="22" viewBox="0 0 22 22"><path d="M11 2 L1.6 7.4 L6 10" fill="none" stroke="#2b2b2b" stroke-width="1.5"/><path d="M10 11 L19.4 15.4 L10 20.4 L0.8 15.4 Z" fill="#2b2b2b"/><rect x="11.6" y="0.6" width="9" height="9" fill="#0b9a3c"/><path d="M16.1 2.2 V8 M13.2 5.1 H19" stroke="#fff" stroke-width="1.3"/></svg>
<svg style="left:40px;top:875px" width="24" height="24" viewBox="0 0 24 24"><path d="M11 2 L1.6 6.6 L6 9 M3 9.6 L1.6 10.6 L10 15 L18.6 10.6 L17 9.6 M3 13.6 L1.6 14.6 L10 19.4 L18.6 14.6 L17 13.6" fill="none" stroke="#2b2b2b" stroke-width="1.4"/><rect x="11.6" y="0.6" width="9" height="9" fill="#0b9a3c"/><path d="M16.1 2.2 V8 M13.2 5.1 H19" stroke="#fff" stroke-width="1.3"/><path d="M23 18.6 V23 H18.6 Z" fill="#555"/></svg>
<span class="t" style="left:74px;top:880px;font-size:15px;font-style:italic;font-family:'Liberation Serif',serif;color:#c2c2c2">fx</span>
<svg style="left:86px;top:875px" width="9" height="9" viewBox="0 0 9 9"><rect width="9" height="9" fill="#cfcfcf"/><path d="M4.5 1.5 V7.5 M1.5 4.5 H7.5" stroke="#f3f3f3" stroke-width="1.2"/></svg>
<svg style="left:107px;top:875px" width="18" height="21" viewBox="0 0 18 21"><path d="M1 3.6 H17 M6 3.4 V1 H12 V3.4" fill="none" stroke="#c2c2c2" stroke-width="1.8"/><path d="M2.6 5.4 H15.4 V20 H2.6 Z" fill="#c2c2c2"/><path d="M6.4 8 V17.6 M9 8 V17.6 M11.6 8 V17.6" stroke="#f3f3f3" stroke-width="1"/></svg>
<div class="a" style="left:304px;top:885px;width:147px;height:1px;background:#bdbdbd"></div>
<div class="a" style="left:304px;top:874px;width:1px;height:24px;background:#c8c8c8"></div>
<div class="a" style="left:377px;top:874px;width:1px;height:24px;background:#c8c8c8"></div>
<div class="a" style="left:450px;top:874px;width:1px;height:24px;background:#c8c8c8"></div>
<div class="a" style="left:346px;top:873px;width:7px;height:26px;background:#e9f3fb;border:1px solid #2ba3d9"></div>
</div>
<div class="a" style="left:1868.5px;top:168px;width:1.5px;height:872px;background:#2ba3d9"></div>
<div class="a" id="dtabs" style="left:1870px;top:168px;width:26px;height:872px;background:#ebebeb;font-size:12.4px">
<div class="a" style="left:0;top:0;width:26px;height:208px;background:#d6d6d6"></div>
<div class="a" style="left:0;top:208px;width:26px;height:107px;background:#d2e4fa"></div>
<span class="t" style="left:10px;top:47px;width:60px;height:14px;margin-left:-30px;margin-top:-7px;text-align:center;transform:rotate(90deg)">Learn</span>
<span class="t" style="left:10px;top:153px;width:90px;height:14px;margin-left:-45px;margin-top:-7px;text-align:center;transform:rotate(90deg)">Properties</span>
<span class="t" style="left:10px;top:263px;width:70px;height:14px;margin-left:-35px;margin-top:-7px;text-align:center;transform:rotate(90deg)">Objects</span>
<svg style="left:4px;top:7px" width="18" height="16" viewBox="0 0 18 16"><path d="M9 0.6 L17.4 4.6 L9 8.6 L0.6 4.6 Z" fill="#2b2b2b"/><path d="M3.4 7 V13.4 H14.6 V7 L9 9.8 Z" fill="#2b2b2b"/><path d="M5.4 9.4 V12 H8 V10.6 Z" fill="#d6d6d6"/><path d="M16.4 5 V12" stroke="#2b2b2b" stroke-width="1.2"/></svg>
<svg style="left:4px;top:96px" width="18" height="16" viewBox="0 0 18 16"><path d="M2 8 L8 2 L14 8 L8 14 Z" fill="#d6d6d6" stroke="#2b2b2b" stroke-width="1.4"/><path d="M5.4 9.4 L8 12 L10.6 9.4 Z" fill="#8a5a10"/><path d="M13.6 9 V14 M16.2 9 V14" stroke="#2b2b2b" stroke-width="1.3"/></svg>
<svg style="left:4px;top:216px" width="18" height="16" viewBox="0 0 20 17"><path d="M10 1 L19 5.8 L10 10.6 L1 5.8 Z" fill="#d2e4fa" stroke="#2b2b2b" stroke-width="1.4" stroke-linejoin="round"/><path d="M1 10.6 L4.4 8.8 L10 12 L15.6 8.8 L19 10.6 L10 15.6 Z" fill="#2b2b2b" stroke="#2b2b2b" stroke-width="1" stroke-linejoin="round"/></svg>
<svg style="left:6px;top:322px" width="14" height="14" viewBox="0 0 14 14"><path d="M7 0 V14 M0 7 H14" stroke="#b9b9b9" stroke-width="2"/></svg>
</div>
<div class="a" id="palette" style="left:1896px;top:140px;width:24px;height:900px;background:#f3f3f3">
<svg style="left:2px;top:2px" width="20" height="6" viewBox="0 0 20 6"><g fill="#dedede"><rect x="0" y="0" width="1" height="1"/><rect x="2" y="0" width="1" height="1"/><rect x="4" y="0" width="1" height="1"/><rect x="6" y="0" width="1" height="1"/><rect x="8" y="0" width="1" height="1"/><rect x="10" y="0" width="1" height="1"/><rect x="12" y="0" width="1" height="1"/><rect x="14" y="0" width="1" height="1"/><rect x="16" y="0" width="1" height="1"/><rect x="18" y="0" width="1" height="1"/><rect x="1" y="2" width="1" height="1"/><rect x="3" y="2" width="1" height="1"/><rect x="5" y="2" width="1" height="1"/><rect x="7" y="2" width="1" height="1"/><rect x="9" y="2" width="1" height="1"/><rect x="11" y="2" width="1" height="1"/><rect x="13" y="2" width="1" height="1"/><rect x="15" y="2" width="1" height="1"/><rect x="17" y="2" width="1" height="1"/><rect x="19" y="2" width="1" height="1"/><rect x="0" y="4" width="1" height="1"/><rect x="2" y="4" width="1" height="1"/><rect x="4" y="4" width="1" height="1"/><rect x="6" y="4" width="1" height="1"/><rect x="8" y="4" width="1" height="1"/><rect x="10" y="4" width="1" height="1"/><rect x="12" y="4" width="1" height="1"/><rect x="14" y="4" width="1" height="1"/><rect x="16" y="4" width="1" height="1"/><rect x="18" y="4" width="1" height="1"/></g></svg>
<svg style="left:9px;top:13px" width="6" height="10" viewBox="0 0 6 10"><path d="M0.3 0 V10 L6 5 Z" fill="#555"/></svg>
<svg style="left:3px;top:35px" width="18" height="18" viewBox="0 0 18 18"><path d="M2 16 L4 12 L11 5 L13 7 L6 14 Z" fill="#c4c4c4"/><path d="M10 3.6 L14.4 8 M12 5 L15 1.6 L16.6 3.2 L13.4 6.4" stroke="#c4c4c4" stroke-width="2" fill="none"/></svg>
<svg style="left:7px;top:61px" width="11" height="7" viewBox="0 0 11 7"><path d="M1 6 L5.5 1.4 L10 6" fill="none" stroke="#c9c9c9" stroke-width="1.5"/></svg>
<div class="a" style="left:0;top:0;width:24px;height:850.5px;overflow:hidden">
<div class="a" style="left:1px;top:77.00px;width:22px;height:20.97px;background:#fff;border:1px solid #444"></div>
<svg style="left:3px;top:79.00px" width="18" height="17" viewBox="0 0 18 17"><path d="M2 15 L16 2" stroke="#e84040" stroke-width="1.1"/></svg>
<div class="a" style="left:1.5px;top:97.97px;width:21.5px;height:21.27px;background:#000000;border-top:1px solid rgba(0,0,0,0.18)"></div>
<div class="a" style="left:1.5px;top:118.94px;width:21.5px;height:21.27px;background:#1a1a1a;border-top:1px solid rgba(0,0,0,0.18)"></div>
<div class="a" style="left:1.5px;top:139.91px;width:21.5px;height:21.27px;background:#333333;border-top:1px solid rgba(0,0,0,0.18)"></div>
<div class="a" style="left:1.5px;top:160.88px;width:21.5px;height:21.27px;background:#4d4d4d;border-top:1px solid rgba(0,0,0,0.18)"></div>
<div class="a" style="left:1.5px;top:181.85px;width:21.5px;height:21.27px;background:#666666;border-top:1px solid rgba(0,0,0,0.18)"></div>
<div class="a" style="left:1.5px;top:202.82px;width:21.5px;height:21.27px;background:#808080;border-top:1px solid rgba(0,0,0,0.18)"></div>
<div class="a" style="left:1.5px;top:223.79px;width:21.5px;height:21.27px;background:#999999;border-top:1px solid rgba(0,0,0,0.18)"></div>
<div class="a" style="left:1.5px;top:244.76px;width:21.5px;height:21.27px;background:#b3b3b3;border-top:1px solid rgba(0,0,0,0.18)"></div>
<div class="a" style="left:1.5px;top:265.73px;width:21.5px;height:21.27px;background:#cccccc;border-top:1px solid rgba(0,0,0,0.18)"></div>
<div class="a" style="left:1.5px;top:286.70px;width:21.5px;height:21.27px;background:#e6e6e6;border-top:1px solid rgba(0,0,0,0.18)"></div>
<div class="a" style="left:1px;top:307.67px;width:22px;height:20.97px;background:#fff;border:1px solid #444"></div>
<div class="a" style="left:1.5px;top:328.64px;width:21.5px;height:21.27px;background:#0000ff;border-top:1px solid rgba(0,0,0,0.18)"></div>
<div class="a" style="left:1.5px;top:349.61px;width:21.5px;height:21.27px;background:#00ffff;border-top:1px solid rgba(0,0,0,0.18)"></div>
<div class="a" style="left:1.5px;top:370.58px;width:21.5px;height:21.27px;background:#00ff00;border-top:1px solid rgba(0,0,0,0.18)"></div>
<div class="a" style="left:1.5px;top:391.55px;width:21.5px;height:21.27px;background:#ffff00;border-top:1px solid rgba(0,0,0,0.18)"></div>
<div class="a" style="left:1.5px;top:412.52px;width:21.5px;height:21.27px;background:#ff0000;border-top:1px solid rgba(0,0,0,0.18)"></div>
<div class="a" style="left:1.5px;top:433.49px;width:21.5px;height:21.27px;background:#ff00ff;border-top:1px solid rgba(0,0,0,0.18)"></div>
<div class="a" style="left:1.5px;top:454.46px;width:21.5px;height:21.27px;background:#9900cc;border-top:1px solid rgba(0,0,0,0.18)"></div>
<div class="a" style="left:1.5px;top:475.43px;width:21.5px;height:21.27px;background:#ff6600;border-top:1px solid rgba(0,0,0,0.18)"></div>
<div class="a" style="left:1.5px;top:496.40px;width:21.5px;height:21.27px;background:#ff99cc;border-top:1px solid rgba(0,0,0,0.18)"></div>
<div class="a" style="left:1.5px;top:517.37px;width:21.5px;height:21.27px;background:#6e3232;border-top:1px solid rgba(0,0,0,0.18)"></div>
<div class="a" style="left:1.5px;top:538.34px;width:21.5px;height:21.27px;background:#ccccff;border-top:1px solid rgba(0,0,0,0.18)"></div>
<div class="a" style="left:1.5px;top:559.31px;width:21.5px;height:21.27px;background:#9999ff;border-top:1px solid rgba(0,0,0,0.18)"></div>
<div class="a" style="left:1.5px;top:580.28px;width:21.5px;height:21.27px;background:#6699ff;border-top:1px solid rgba(0,0,0,0.18)"></div>
<div class="a" style="left:1.5px;top:601.25px;width:21.5px;height:21.27px;background:#6666ff;border-top:1px solid rgba(0,0,0,0.18)"></div>
<div class="a" style="left:1.5px;top:622.22px;width:21.5px;height:21.27px;background:#6666cc;border-top:1px solid rgba(0,0,0,0.18)"></div>
<div class="a" style="left:1.5px;top:643.19px;width:21.5px;height:21.27px;background:#003399;border-top:1px solid rgba(0,0,0,0.18)"></div>
<div class="a" style="left:1.5px;top:664.16px;width:21.5px;height:21.27px;background:#000080;border-top:1px solid rgba(0,0,0,0.18)"></div>
<div class="a" style="left:1.5px;top:685.13px;width:21.5px;height:21.27px;background:#336699;border-top:1px solid rgba(0,0,0,0.18)"></div>
<div class="a" style="left:1.5px;top:706.10px;width:21.5px;height:21.27px;background:#00ccff;border-top:1px solid rgba(0,0,0,0.18)"></div>
<div class="a" style="left:1.5px;top:727.07px;width:21.5px;height:21.27px;background:#99ffff;border-top:1px solid rgba(0,0,0,0.18)"></div>
<div class="a" style="left:1.5px;top:748.04px;width:21.5px;height:21.27px;background:#99cccc;border-top:1px solid rgba(0,0,0,0.18)"></div>
<div class="a" style="left:1.5px;top:769.01px;width:21.5px;height:21.27px;background:#669999;border-top:1px solid rgba(0,0,0,0.18)"></div>
<div class="a" style="left:1.5px;top:789.98px;width:21.5px;height:21.27px;background:#336666;border-top:1px solid rgba(0,0,0,0.18)"></div>
<div class="a" style="left:1.5px;top:810.95px;width:21.5px;height:21.27px;background:#003333;border-top:1px solid rgba(0,0,0,0.18)"></div>
<div class="a" style="left:1.5px;top:831.92px;width:21.5px;height:21.27px;background:#006633;border-top:1px solid rgba(0,0,0,0.18)"></div>
</div>
<svg style="left:7px;top:856px" width="11" height="7" viewBox="0 0 11 7"><path d="M1 1 L5.5 5.6 L10 1" fill="none" stroke="#bdbdbd" stroke-width="1.5"/></svg>
<svg style="left:6px;top:877px" width="13" height="10" viewBox="0 0 13 10"><path d="M1 1 L5 5 L1 9 M7 1 L11 5 L7 9" fill="none" stroke="#c4c4c4" stroke-width="1.4"/></svg>
</div>
<div class="a" id="dialog" style="left:293px;top:226px;width:680px;height:597px;background:#fff;border:1px solid #aab2bc;box-shadow:0 0 3px rgba(0,0,0,0.45);font-size:21.8px;color:#111">
<span class="t" style="left:18.0px;top:15.6px;font-size:21.5px">Change Document Defaults</span>
<svg style="left:631px;top:9px" width="26" height="22" viewBox="0 0 26 22"><path d="M1.6 1 L24.4 21 M24.4 1 L1.6 21" stroke="#000" stroke-width="3.9" fill="none"/></svg>
<div class="a" style="left:9px;top:51px;width:660px;height:534px;background:#f3f3f3"></div>
<div class="a" style="left:23.0px;top:65.0px;width:30px;height:30px;border-radius:15px;background:#0a70d0;border:1px solid #0a4f9e"></div>
<div class="a" style="left:36.8px;top:71.0px;width:2.4px;height:3px;background:#fff"></div>
<div class="a" style="left:36.8px;top:76.4px;width:2.4px;height:13px;background:#fff"></div>
<span class="t" style="left:61px;top:70.5px;letter-spacing:0.15px">You are about to change the default object properties for</span>
<span class="t" style="left:61px;top:100.3px;letter-spacing:0.07px">objects created in the current document.</span>
<span class="t" style="left:61px;top:139.0px;letter-spacing:0.06px">Enable the check boxes for the default object properties you</span>
<span class="t" style="left:61px;top:169.0px;letter-spacing:0.00px">want to change:</span>
<div class="a" style="left:23px;top:201px;width:631px;height:1.5px;background:#d4d4d4"></div>
<div class="a" style="left:23px;top:214px;width:26px;height:26px;background:#fff;border:2px solid #0a84d8"></div>
<span class="t" style="left:55px;top:218.0px;letter-spacing:0.00px">Artistic Media</span>
<div class="a" style="left:23px;top:252px;width:26px;height:26px;background:#fff;border:1px solid #9c9c9c"></div>
<span class="t" style="left:55px;top:256.0px;letter-spacing:0.00px">Artistic Text</span>
<div class="a" style="left:23px;top:290px;width:26px;height:26px;background:#fff;border:1px solid #9c9c9c"></div>
<span class="t" style="left:55px;top:294.0px;letter-spacing:-0.15px">Callout</span>
<div class="a" style="left:23px;top:328px;width:26px;height:26px;background:#fff;border:1px solid #9c9c9c"></div>
<span class="t" style="left:55px;top:332.0px;letter-spacing:-0.15px">Dimension</span>
<div class="a" style="left:23px;top:366px;width:26px;height:26px;background:#fff;border:1px solid #9c9c9c"></div>
<svg style="left:27px;top:371px" width="18" height="17" viewBox="0 0 18 17"><path d="M1.2 9 L6.4 14.6 L16.8 1.4" stroke="#000" stroke-width="3" fill="none"/></svg>
<span class="t" style="left:55px;top:370.0px;letter-spacing:-0.40px">Graphic</span>
<div class="a" style="left:23px;top:404px;width:26px;height:26px;background:#fff;border:1px solid #9c9c9c"></div>
<span class="t" style="left:55px;top:408.0px;letter-spacing:-0.33px">Paragraph Text</span>
<div class="a" style="left:23px;top:442px;width:26px;height:26px;background:#fff;border:1px solid #9c9c9c"></div>
<span class="t" style="left:55px;top:446.0px;letter-spacing:-0.45px">QR Code</span>
<div class="a" style="left:23px;top:478px;width:631px;height:1.5px;background:#d4d4d4"></div>
<div class="a" style="left:23px;top:492px;width:26px;height:26px;background:#fff;border:1px solid #9c9c9c"></div>
<span class="t" style="left:55px;top:493.9px">Do not show this dialog <u style="text-underline-offset:2px">a</u>gain</span>
<div class="a" style="left:22px;top:527px;width:46px;height:45px;background:#e6e6e6;border:2px solid #b0b0b0;text-align:center;line-height:1"><span class="t" style="position:relative;top:9.9px">?</span></div>
<div class="a" style="left:329px;top:527px;width:160px;height:45px;background:#e6e6e6;border:2px solid #b0b0b0;text-align:center;line-height:1"><span class="t" style="position:relative;top:9.9px">OK</span></div>
<div class="a" style="left:495px;top:527px;width:160px;height:45px;background:#e6e6e6;border:2px solid #b0b0b0;text-align:center;line-height:1"><span class="t" style="position:relative;top:9.9px"><span style="letter-spacing:-0.8px">Cancel</span></span></div>
</div>
</body></html>
